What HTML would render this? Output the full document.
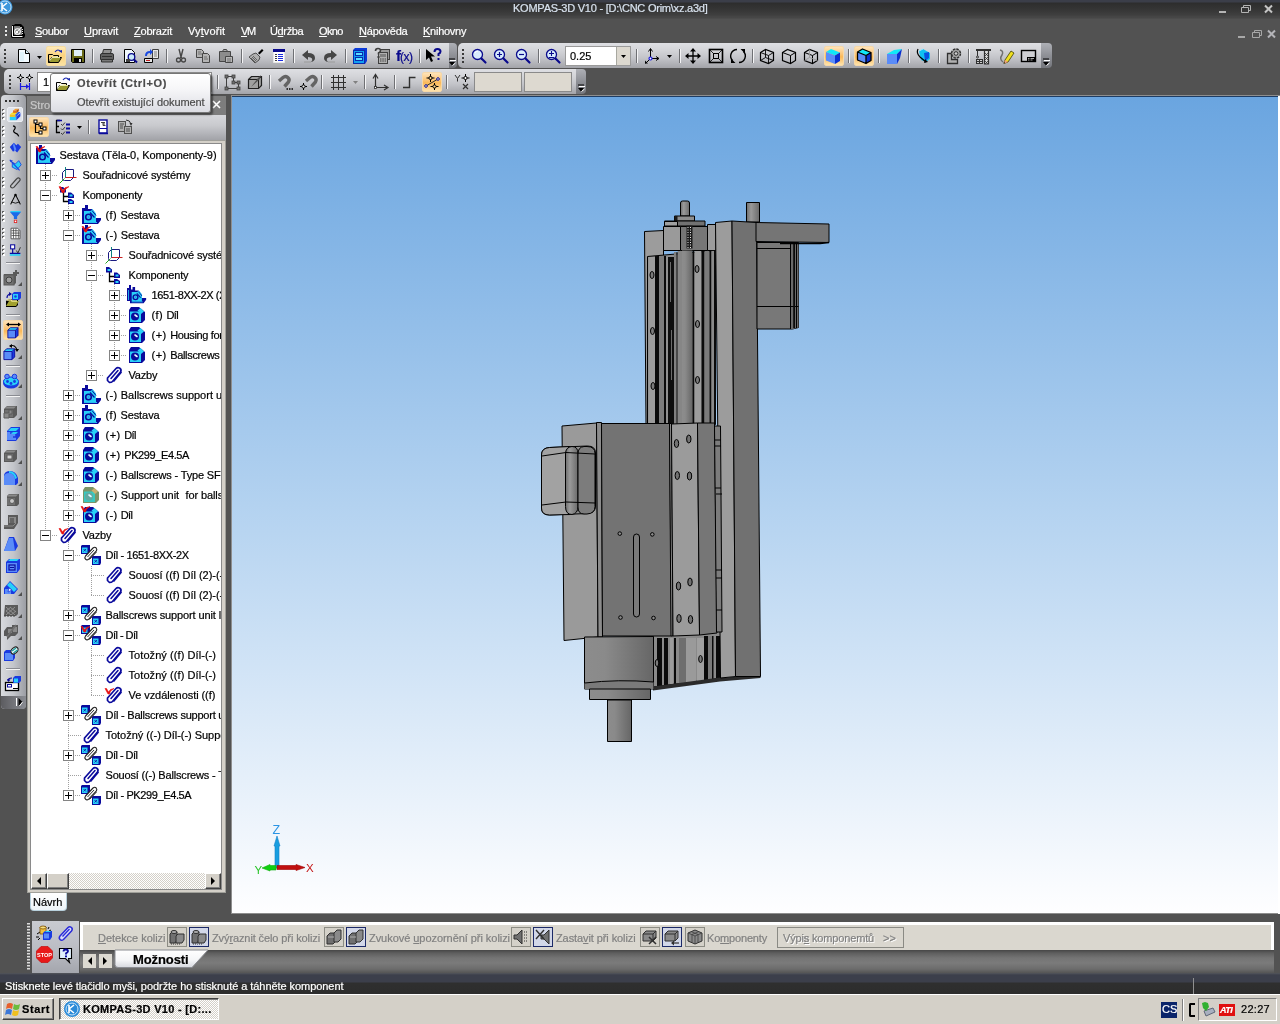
<!DOCTYPE html>
<html lang="cs">
<head>
<meta charset="utf-8">
<title>KOMPAS-3D V10 - [D:\CNC Orim\xz.a3d]</title>
<style>
*{box-sizing:border-box;margin:0;padding:0}
html,body{width:1280px;height:1024px;overflow:hidden;background:#525252}
body{font-family:"Liberation Sans",sans-serif;font-size:11px;line-height:13px;color:#000;position:relative}
.a{position:absolute}
.t{position:absolute;white-space:nowrap;-webkit-text-stroke:0.2px currentColor}
u{text-decoration:underline;text-underline-offset:1px}
#titlebar{left:0;top:0;width:1280px;height:19px;background:linear-gradient(#3b3e49 0,#3b3e49 2px,#2d2d2d 3px,#363636 10px,#3f3f3f 15px,#474747 17px,#464646 18px,#525252 19px)}
#title{left:513px;top:2px;color:#d8e2ee;font-size:11px}
#menubar{left:0;top:19px;width:1280px;height:24px;background:#525252}
.mi{top:25px;color:#fff}
.tb{border-radius:4px;background:linear-gradient(#dedfe3 0,#d3d4d8 30%,#c3c4c9 60%,#a3a4a9 100%)}
.tbend{background:linear-gradient(#aeb0b6,#8e9096 50%,#74767c);border-radius:0 4px 4px 0}
.sep{position:absolute;width:2px;height:14px;border-left:1px solid #6f7074;border-right:1px solid #f4f4f6}
.grip{position:absolute;width:2px;height:14px;background:repeating-linear-gradient(#3a3a3a 0,#3a3a3a 2px,transparent 2px,transparent 4px)}
.hot{position:absolute;border-radius:2px;background:linear-gradient(#fde9b8,#fbd27c 50%,#fbe2a2);border:1px solid #f5dca0}
.sel{position:absolute;border-radius:2px;background:linear-gradient(#fee3b8 0,#fcc880 35%,#fab858 55%,#fdd088 80%,#fee4ac 100%);border:1px solid #f6d8a8}
.inp{position:absolute;background:#fff;border:1px solid #8a8a8a}
.beige{position:absolute;background:#ddd9d0;border:1px solid #8a8a8a}
#viewport{left:231px;top:95px;width:1048px;height:818px;border:1px solid #8d8d8d;border-top-color:#8d8d8d;background:#fff}
#vp{left:232px;top:97px;width:1046px;height:815px;background:linear-gradient(#6aa5e0 0%,#b3d2f0 50%,#fefeff 100%)}
#lefttb{left:1px;top:95px;width:25px;height:614px;border-radius:4px 4px 4px 4px;background:linear-gradient(90deg,#d8dade 0,#c3c5ca 50%,#9c9ea4 100%)}
#tree{left:31px;top:144px;width:190px;height:729px;background:#fff;overflow:hidden}
.row{position:absolute;left:0;height:20px;white-space:nowrap}
.row .tx{position:absolute;top:4px;white-space:nowrap}
.ex{position:absolute;width:11px;height:11px;border:1px solid #848484;background:#fff}
.ex:before{content:"";position:absolute;left:1px;top:4px;width:7px;height:1px;background:#000}
.ex.p:after{content:"";position:absolute;left:4px;top:1px;width:1px;height:7px;background:#000}
.vd{position:absolute;width:1px;background:repeating-linear-gradient(#a0a0a0 0,#a0a0a0 1px,transparent 1px,transparent 2px)}
.hd{position:absolute;height:1px;background:repeating-linear-gradient(90deg,#a0a0a0 0,#a0a0a0 1px,transparent 1px,transparent 2px)}
svg{position:absolute;overflow:visible}
.dis{color:#808080}
.btn3{position:absolute;background:#d4d0c8;border:1px solid;border-color:#fff #404040 #404040 #fff;box-shadow:inset -1px -1px 0 #808080}
</style>
</head>
<body>
<div id="root" class="a" style="left:0;top:0;width:1280px;height:1024px;will-change:transform;background:#525252">
<!-- title bar -->
<div class="a" id="titlebar"></div>
<svg style="left:0;top:0" width="14" height="16" viewBox="0 0 14 16"><circle cx="5" cy="7" r="7.5" fill="#3d97dc"/><circle cx="5" cy="7" r="6" fill="none" stroke="#bfe0f8" stroke-width="1"/><path d="M2 3v8M2 7l5-4M2 7l5 4" stroke="#fff" stroke-width="1.6" fill="none"/></svg>
<div class="t" id="title" style="letter-spacing:-0.229px;">KOMPAS-3D V10 - [D:\CNC Orim\xz.a3d]</div>
<svg style="left:1210px;top:0" width="70" height="19" viewBox="0 0 70 19"><rect x="9" y="11" width="7" height="2" fill="#b4b4b4"/><path d="M31.500 7.500h7v5h-7zM33.500 7.500v-2h7v5h-2" fill="none" stroke="#b4b4b4"/><path d="M55 5.500l7 7M62 5.500l-7 7" stroke="#c4c4c4" stroke-width="2" fill="none"/></svg>
<!-- menubar -->
<div class="a" id="menubar"></div>
<div class="grip" style="left:5px;top:26px;height:11px;width:2px;background:repeating-linear-gradient(#e8e8e8 0,#e8e8e8 2px,transparent 2px,transparent 4px)"></div>
<svg style="left:11px;top:24px" width="14" height="14" viewBox="0 0 14 14"><path d="M1 1h2l1-1h6l3 3v6l1 1v2l-1 2h-12l-1-1z" fill="#000"/><path d="M1.500 2v10.500h10" fill="none" stroke="#fff" stroke-width="1"/><rect x="3" y="3" width="8" height="8" fill="#7a7a7a"/><path d="M3.500 2.500h5M11.500 5v6" stroke="#e8e8e8" stroke-width="1" stroke-dasharray="1 1"/><circle cx="6.500" cy="7.500" r="2.800" fill="none" stroke="#fff" stroke-width="1.100"/><path d="M5.500 8.500l5-5.500" stroke="#fff" stroke-width="1"/><circle cx="6" cy="8" r="1.200" fill="#fff"/></svg>
<div class="t mi" id="m0" style="letter-spacing:-0.364px;left:35px"><u>S</u>oubor</div>
<div class="t mi" id="m1" style="letter-spacing:-0.080px;left:84px"><u>U</u>pravit</div>
<div class="t mi" id="m2" style="letter-spacing:-0.196px;left:134px"><u>Z</u>obrazit</div>
<div class="t mi" id="m3" style="letter-spacing:0.115px;left:188px">Vy<u>t</u>vořit</div>
<div class="t mi" id="m4" style="letter-spacing:-1.358px;left:241px"><u>V</u>M</div>
<div class="t mi" id="m5" style="letter-spacing:-0.364px;left:270px">Ú<u>d</u>ržba</div>
<div class="t mi" id="m6" style="letter-spacing:-0.678px;left:319px"><u>O</u>kno</div>
<div class="t mi" id="m7" style="letter-spacing:-0.209px;left:359px"><u>N</u>ápověda</div>
<div class="t mi" id="m8" style="letter-spacing:-0.258px;left:423px"><u>K</u>nihovny</div>
<svg style="left:1238px;top:28px" width="40" height="12" viewBox="0 0 40 12"><rect x="0" y="8" width="7" height="2" fill="#a8a8a8"/><path d="M14.500 4.500h7v5h-7zM16.500 4.500v-2h7v5h-2" fill="none" stroke="#a8a8a8"/><path d="M30 2.500l7 7M37 2.500l-7 7" stroke="#b4b4b8" stroke-width="2" fill="none"/></svg>
<!-- toolbar row 1 -->
<div class="a tb" style="left:0px;top:43px;width:450px;height:25px;border-radius:5px 0 0 5px"></div>
<div class="a tbend" style="left:449px;top:43px;width:8px;height:25px"></div>
<div class="a tb" style="left:458px;top:43px;width:584px;height:25px;border-radius:5px 0 0 5px"></div>
<div class="a tbend" style="left:1041px;top:43px;width:11px;height:25px"></div>
<!-- toolbar row 2 -->
<div class="a tb" style="left:4px;top:69px;width:573px;height:25px;border-radius:5px 0 0 5px"></div>
<div class="a tbend" style="left:576px;top:69px;width:10px;height:25px"></div>
<div class="grip" style="left:4px;top:49px"></div>
<div class="hot" style="left:46px;top:46px;width:20px;height:20px"></div>
<svg style="left:16px;top:48px" width="16" height="16" viewBox="0 0 16 16"><path d="M2.500 1.500h7l4 4v9h-11z" fill="#f4fbff" stroke="#000"/><path d="M9.500 1.500v4h4" fill="#cfe8f4" stroke="#000"/><path d="M4 4h4v9h-4z" fill="#e0f2fa"/></svg>
<svg style="left:47px;top:48px" width="16" height="16" viewBox="0 0 16 16"><path d="M1.500 6.500h4l1 1h5v2" fill="#f0e8a0" stroke="#000"/><path d="M1.500 6.500v8h10l3-5h-10l-3 5" fill="#9a9a30" stroke="#000" stroke-linejoin="round"/><path d="M2.500 13l2.500-3.500h8" stroke="#e8e8b0" fill="none"/><path d="M8 4q3-4 6 0" fill="none" stroke="#1a2ab0" stroke-width="1.200"/><path d="M12 3l3 2l0-3z" fill="#1a2ab0"/></svg>
<svg style="left:70px;top:48px" width="16" height="16" viewBox="0 0 16 16"><path d="M1.500 1.500h13v13h-12l-1-1z" fill="#6a6a18" stroke="#000"/><rect x="4" y="2" width="8" height="6" fill="#e0f0f8"/><rect x="4" y="10" width="8" height="4" fill="#000"/><rect x="9" y="11" width="2" height="3" fill="#e0e0e0"/></svg>
<svg style="left:99px;top:48px" width="16" height="16" viewBox="0 0 16 16"><path d="M4.500 1.500h8l-1 4h-8z" fill="#909090" stroke="#303030"/><path d="M1.500 7q0-1.500 1.500-1.500h10q1.500 0 1.500 1.500v4.500h-13z" fill="#606060" stroke="#303030"/><path d="M2.500 11.500h11v2.500h-11z" fill="#787878" stroke="#303030"/><path d="M3 8.500h10" stroke="#303030"/></svg>
<svg style="left:122px;top:48px" width="16" height="16" viewBox="0 0 16 16"><path d="M2.500 1.500h7l3 3v10h-10z" fill="#f0f8fc" stroke="#000"/><circle cx="9.500" cy="9" r="3.300" fill="#c8e8f8" stroke="#0a0a8c" stroke-width="1.300"/><path d="M12 11.500l3 3" stroke="#0a0a8c" stroke-width="2"/><rect x="4" y="11" width="4" height="3" fill="#404040"/></svg>
<svg style="left:143px;top:48px" width="16" height="16" viewBox="0 0 16 16"><path d="M9.500 1.500h6v9h-6z" fill="#e8e8e8" stroke="#404040"/><path d="M11 4h3M11 6h3M11 8h3" stroke="#808080"/><path d="M1.500 10.500h8v4h-8z" fill="#e8e8e8" stroke="#000"/><rect x="3" y="12" width="4" height="1" fill="#c02020"/><path d="M2 8q0-5 5-5v-2l3 3l-3 3v-2q-3 0-3 3z" fill="#1a4ae0"/></svg>
<svg style="left:173px;top:48px" width="16" height="16" viewBox="0 0 16 16"><path d="M6 1l2 8l2-8" fill="none" stroke="#464646" stroke-width="1.400"/><circle cx="5.500" cy="12" r="2" fill="none" stroke="#464646" stroke-width="1.300"/><circle cx="10.500" cy="12" r="2" fill="none" stroke="#464646" stroke-width="1.300"/><path d="M8 9l-2 2M8 9l2 2" stroke="#464646"/></svg>
<svg style="left:195px;top:48px" width="16" height="16" viewBox="0 0 16 16"><path d="M1.500 1.500h5l2 2v6h-7z" fill="#b4b4b4" stroke="#464646"/><path d="M7.500 5.500h5l2 2v7h-7z" fill="#b4b4b4" stroke="#464646"/><path d="M3 4h3M3 6h4M9 9h3M9 11h4" stroke="#707070"/></svg>
<svg style="left:218px;top:48px" width="16" height="16" viewBox="0 0 16 16"><path d="M1.500 3.500h11v10h-11z" fill="#8c8c8c" stroke="#464646"/><path d="M4.500 3.500l1-2h3l1 2z" fill="#b0b0b0" stroke="#464646"/><path d="M7.500 8.500h7v6h-7z" fill="#b8b8b8" stroke="#464646"/><path d="M9 11h4M9 13h4" stroke="#707070"/></svg>
<svg style="left:248px;top:48px" width="16" height="16" viewBox="0 0 16 16"><path d="M10 5l4-4l1.500 1.500l-4 4z" fill="#000"/><path d="M5 6l3-1l4 4l-1 3l-4 3l-6-6z" fill="#b0b0b0" stroke="#505050"/><path d="M3 10l4 4M5 8l4 4M4 9l4 4" stroke="#505050" stroke-width="0.800"/></svg>
<svg style="left:271px;top:48px" width="16" height="16" viewBox="0 0 16 16"><path d="M2.500 1.500h11v13h-11z" fill="#fff" stroke="#e8e8e8"/><rect x="2" y="1" width="12" height="3" fill="#0a0a8c"/><g shape-rendering="crispEdges"><path d="M4 6.500h2M4 8.500h2M4 10.500h2M4 12.500h2" stroke="#404040"/><path d="M7 6.500h5M7 8.500h5M7 10.500h5M7 12.500h5" stroke="#1a2ae0"/></g></svg>
<svg style="left:301px;top:48px" width="16" height="16" viewBox="0 0 16 16"><path d="M1 7l6-5v3q7 0 7 5q0 3-4 4q2-2 1-3.500q-1-1.500-4-1.500v3z" fill="#464646"/><path d="M3 14h7" stroke="#9a9a9a"/></svg>
<svg style="left:322px;top:48px" width="16" height="16" viewBox="0 0 16 16"><path d="M15 7l-6-5v3q-7 0-7 5q0 3 4 4q-2-2-1-3.500q1-1.500 4-1.500v3z" fill="#464646"/><path d="M6 14h7" stroke="#9a9a9a"/></svg>
<svg style="left:352px;top:48px" width="16" height="16" viewBox="0 0 16 16"><path d="M1 2l2-2h12v13l-2 3h-12z" fill="#0a3ad8"/><rect x="1.500" y="2.500" width="11" height="13" fill="#10a0f0" stroke="#0a2ab0"/><rect x="3.500" y="4.500" width="7" height="3" fill="#60e0ff" stroke="#0a2ab0"/><rect x="3.500" y="9.500" width="7" height="3" fill="#60e0ff" stroke="#0a2ab0"/></svg>
<svg style="left:374px;top:48px" width="16" height="16" viewBox="0 0 16 16"><rect x="6.500" y="1.500" width="9" height="10" fill="#9a9a9a" stroke="#404040"/><rect x="4.500" y="4.500" width="9" height="11" fill="#b0b0b0" stroke="#404040"/><rect x="6" y="6" width="6" height="3" fill="#808080"/><path d="M6 11h6M6 13h6" stroke="#404040" stroke-dasharray="1.500 0.800"/><path d="M1.500 3q0-2.500 2.500-2.500q2.500 0 2.500 2q0 1.500-2 2.500v1.500" fill="none" stroke="#404040" stroke-width="1.600"/><rect x="3.500" y="8" width="2" height="2" fill="#404040"/></svg>
<svg style="left:425px;top:48px" width="16" height="16" viewBox="0 0 16 16"><path d="M1 1v11l3-2.500l2 4.500l2-1l-2-4.500h4z" fill="#000"/><path d="M9.500 4q0-3 3-3q3 0 3 2.500q0 1.500-2 2.500v2" fill="none" stroke="#0a0a8c" stroke-width="2"/><rect x="12.500" y="10" width="2" height="2" fill="#0a0a8c"/></svg>
<svg style="left:37px;top:56px" width="5" height="3" viewBox="0 0 5 3"><path d="M0 0h5l-2.500 3z" fill="#000"/></svg>
<div class="sep" style="left:92px;top:49px;height:14px"></div>
<div class="sep" style="left:166px;top:49px;height:14px"></div>
<div class="sep" style="left:241px;top:49px;height:14px"></div>
<div class="sep" style="left:293px;top:49px;height:14px"></div>
<div class="sep" style="left:345px;top:49px;height:14px"></div>
<div class="sep" style="left:419px;top:49px;height:14px"></div>
<div class="t" style="left:396px;top:48px;color:#0a0a8c;font-size:15px;line-height:16px;font-weight:bold;letter-spacing:-1px">f<span style="font-weight:normal;font-size:12px;letter-spacing:-0.500px">(x)</span></div>
<svg style="left:449px;top:59px" width="7" height="7" viewBox="0 0 7 7"><path d="M0 0h6" stroke="#000" stroke-width="1"/><path d="M1 1.500h6" stroke="#fff" stroke-width="1"/><path d="M0 3h6l-3 3.500z" fill="#000"/><path d="M3.500 6.500l3-2.500" stroke="#fff"/></svg>
<svg style="left:1043px;top:59px" width="7" height="7" viewBox="0 0 7 7"><path d="M0 0h6" stroke="#000" stroke-width="1"/><path d="M1 1.500h6" stroke="#fff" stroke-width="1"/><path d="M0 3h6l-3 3.500z" fill="#000"/><path d="M3.500 6.500l3-2.500" stroke="#fff"/></svg>
<svg style="left:578px;top:85px" width="7" height="7" viewBox="0 0 7 7"><path d="M0 0h6" stroke="#000" stroke-width="1"/><path d="M1 1.500h6" stroke="#fff" stroke-width="1"/><path d="M0 3h6l-3 3.500z" fill="#000"/><path d="M3.500 6.500l3-2.500" stroke="#fff"/></svg>
<div class="grip" style="left:462px;top:49px"></div>
<div class="sel" style="left:824px;top:46px;width:20px;height:20px"></div>
<div class="sel" style="left:854px;top:46px;width:20px;height:20px"></div>
<svg style="left:471px;top:48px" width="16" height="16" viewBox="0 0 16 16"><circle cx="6.500" cy="6.500" r="5" fill="#d8ecfc" stroke="#0a0a8c" stroke-width="1.300"/><path d="M10.500 10.500l4 4" stroke="#0a0a8c" stroke-width="2.200" stroke-linecap="round"/><path d="M4 5q1-2 3-2" stroke="#fff" fill="none"/></svg>
<svg style="left:493px;top:48px" width="16" height="16" viewBox="0 0 16 16"><circle cx="6.500" cy="6.500" r="5" fill="#d8ecfc" stroke="#0a0a8c" stroke-width="1.300"/><path d="M10.500 10.500l4 4" stroke="#0a0a8c" stroke-width="2.200" stroke-linecap="round"/><path d="M4 6.500h5M6.500 4v5" stroke="#0a0a8c" stroke-width="1.200"/></svg>
<svg style="left:515px;top:48px" width="16" height="16" viewBox="0 0 16 16"><circle cx="6.500" cy="6.500" r="5" fill="#d8ecfc" stroke="#0a0a8c" stroke-width="1.300"/><path d="M10.500 10.500l4 4" stroke="#0a0a8c" stroke-width="2.200" stroke-linecap="round"/><path d="M4 6.500h5" stroke="#0a0a8c" stroke-width="1.200"/></svg>
<svg style="left:545px;top:48px" width="16" height="16" viewBox="0 0 16 16"><circle cx="6.500" cy="6.500" r="5" fill="#d8ecfc" stroke="#0a0a8c" stroke-width="1.300"/><path d="M10.500 10.500l4 4" stroke="#0a0a8c" stroke-width="2.200" stroke-linecap="round"/><path d="M4 5.500h5M6.500 3v5M4 9.500h5" stroke="#0a0a8c" stroke-width="1.100"/></svg>
<svg style="left:644px;top:48px" width="16" height="16" viewBox="0 0 16 16"><path d="M6.500 1v9M6.500 10.500h8M6.500 10.500l-5 5" stroke="#000" fill="none"/><path d="M4.500 3.500l2-3l2 3M12 8.500l3 2l-3 2" fill="none" stroke="#000"/><path d="M1 12.500v3h3z" fill="#000"/><circle cx="6.500" cy="10.500" r="1.500" fill="#fff" stroke="#1a1ae0" stroke-width="1.200"/></svg>
<svg style="left:685px;top:48px" width="16" height="16" viewBox="0 0 16 16"><path d="M8 1v14M1 8h14" stroke="#000" stroke-width="1.300"/><path d="M8 0l3 3.500h-6zM8 16l3-3.500h-6zM0 8l3.500-3v6zM16 8l-3.500-3v6z" fill="#000"/></svg>
<svg style="left:708px;top:48px" width="16" height="16" viewBox="0 0 16 16"><rect x="1.500" y="1.500" width="13" height="13" fill="none" stroke="#000" stroke-width="1.600"/><rect x="5.500" y="5.500" width="5" height="5" fill="none" stroke="#000"/><path d="M2 2l3.500 3.500M14 2l-3.500 3.500M2 14l3.500-3.500M14 14l-3.500-3.500" stroke="#000" stroke-width="0.800"/></svg>
<svg style="left:730px;top:48px" width="16" height="16" viewBox="0 0 16 16"><path d="M7 1.500a6.500 6.500 0 0 0 -4.500 11" fill="none" stroke="#000" stroke-width="1.400"/><path d="M9 14.500a6.500 6.500 0 0 0 4.500 -11" fill="none" stroke="#000" stroke-width="1.400"/><path d="M1 10.500l4.500 4.500l-4.500 0z M15 5.500l-4.500-4.500l4.500 0z" fill="#000"/></svg>
<svg style="left:759px;top:48px" width="16" height="16" viewBox="0 0 16 16"><path d="M1.500 4.500l5-3l8 3v8l-5 3l-8-3z" fill="none" stroke="#000" stroke-width="1.200"/><path d="M1.500 4.500l8 3l5-3M9.500 7.500v8M6.500 1.500v8l-5 3M6.500 9.500l8 3" fill="none" stroke="#000" stroke-width="0.900"/></svg>
<svg style="left:781px;top:48px" width="16" height="16" viewBox="0 0 16 16"><path d="M1.500 4.500l5-3l8 3v8l-5 3l-8-3z" fill="none" stroke="#000" stroke-width="1.200"/><path d="M1.500 4.500l8 3l5-3M9.500 7.500v8" fill="none" stroke="#000" stroke-width="1"/></svg>
<svg style="left:803px;top:48px" width="16" height="16" viewBox="0 0 16 16"><path d="M1.500 4.500l5-3l8 3v8l-5 3l-8-3z" fill="none" stroke="#000" stroke-width="1.200"/><path d="M1.500 4.500l8 3l5-3M9.500 7.500v8" fill="none" stroke="#000" stroke-width="1"/><path d="M6.500 1.500v8l-5 3M6.500 9.500l8 3" fill="none" stroke="#9a9a9a" stroke-width="0.900"/></svg>
<svg style="left:825px;top:48px" width="16" height="16" viewBox="0 0 16 16"><path d="M1 4l5-3l9 3.500l-5 3z" fill="#10e8f8"/><path d="M1 4l9 3.500v8.500l-9-3.500z" fill="#5a8cf8"/><path d="M10 7.500l5-3v8.500l-5 3z" fill="#0a30d0"/></svg>
<svg style="left:856px;top:48px" width="16" height="16" viewBox="0 0 16 16"><path d="M1.500 4l5-3l8.500 3.500l-5 3z" fill="#10e8f8"/><path d="M1.500 4l8.500 3.500v8l-8.500-3.500z" fill="#5a8cf8"/><path d="M10 7.500l5-3v8l-5 3z" fill="#0a30d0"/><path d="M1.500 4l5-3l8.500 3.500v8l-5 3l-8.500-3.500zM1.500 4l8.500 3.500l5-3M10 7.500v8" fill="none" stroke="#000" stroke-width="1.300" stroke-linejoin="round"/></svg>
<svg style="left:886px;top:48px" width="16" height="16" viewBox="0 0 16 16"><path d="M1 6l7-4l8-1l-5 5z" fill="#10e8f8"/><path d="M1 6h10v10h-10z" fill="#5a8cf8"/><path d="M11 6l5-5l-2 9l-3 6z" fill="#0a30d0"/></svg>
<svg style="left:916px;top:48px" width="16" height="16" viewBox="0 0 16 16"><path d="M3 3l4-2l7 4v6l-4 3l-5-2z" fill="#10c0f0"/><path d="M8 5l5-1v6l-4 3z" fill="#0a50e0"/><path d="M2 1q-2 4 2 8l6 5" fill="none" stroke="#000" stroke-width="1.200"/><path d="M8 15l4-1l-3-3z" fill="#000"/><path d="M3 3l4-2" stroke="#a0e8ff"/></svg>
<svg style="left:946px;top:48px" width="16" height="16" viewBox="0 0 16 16"><path d="M1.500 5.500h4v6h6v4h-10z" fill="#b0b0b0" stroke="#303030" stroke-width="1.300"/><circle cx="10" cy="5.500" r="4.500" fill="#a0a0a0" stroke="#303030" stroke-width="1.400" stroke-dasharray="2.500 1"/><circle cx="10" cy="5.500" r="1.800" fill="#d0d0d0" stroke="#303030"/></svg>
<svg style="left:975px;top:48px" width="16" height="16" viewBox="0 0 16 16"><path d="M1 2h15" stroke="#303030" stroke-width="2"/><path d="M9.500 3v13h4v-13" fill="#d8d8d8" stroke="#303030" stroke-width="1.200"/><path d="M10 5l3 3M13 5l-3 3M10 9l3 3M13 9l-3 3M10 13l3 3M13 13l-3 3" stroke="#303030" stroke-width="0.800"/><path d="M2.500 3v5" stroke="#303030"/><circle cx="2.500" cy="9" r="1" fill="none" stroke="#303030"/><rect x="1.500" y="11.500" width="6" height="4" fill="#d0d0d0" stroke="#303030"/><path d="M4.500 11.500v4M1.500 13.500h6" stroke="#303030"/></svg>
<svg style="left:998px;top:48px" width="16" height="16" viewBox="0 0 16 16"><path d="M2 2q4 1 2 5q-3 4 1 7" fill="none" stroke="#707070" stroke-width="1.500"/><path d="M7 12l6-9l3 2l-6 9l-4 1.500z" fill="#f0e020" stroke="#404000" stroke-width="0.800"/><path d="M7 12l3 2l-4 1.500z" fill="#f0a080"/><path d="M5.500 15.500l1.500-0.500l-1-1z" fill="#000"/></svg>
<svg style="left:1020px;top:48px" width="16" height="16" viewBox="0 0 16 16"><rect x="1.500" y="2.500" width="14" height="11" fill="#cfd0d4" stroke="#000" stroke-width="1.400"/><rect x="7" y="9" width="8" height="4" fill="#000"/><path d="M8 10.500h1.500M10.500 10.500h3.500M8 12h1.500M10.500 12h2" stroke="#d0d0d0" stroke-width="0.800"/></svg>
<svg style="left:667px;top:55px" width="5" height="3" viewBox="0 0 5 3"><path d="M0 0h5l-2.500 3z" fill="#000"/></svg>
<div class="sep" style="left:538px;top:49px;height:14px"></div>
<div class="sep" style="left:636px;top:49px;height:14px"></div>
<div class="sep" style="left:679px;top:49px;height:14px"></div>
<div class="sep" style="left:752px;top:49px;height:14px"></div>
<div class="sep" style="left:848px;top:49px;height:14px"></div>
<div class="sep" style="left:878px;top:49px;height:14px"></div>
<div class="sep" style="left:908px;top:49px;height:14px"></div>
<div class="sep" style="left:938px;top:49px;height:14px"></div>
<div class="sep" style="left:968px;top:49px;height:14px"></div>
<div class="inp" style="left:565px;top:46px;width:66px;height:20px;border-color:#9a9a9a"></div>
<div class="a" style="left:616px;top:47px;width:14px;height:18px;background:#dcd8cf;border-left:1px solid #a8a8a0"></div>
<svg style="left:621px;top:55px" width="5" height="3" viewBox="0 0 5 3"><path d="M0 0h5l-2.500 3z" fill="#000"/></svg>
<div class="t" style="left:570px;top:50px">0.25</div>
<div class="grip" style="left:9px;top:75px"></div>
<div class="sel" style="left:422px;top:72px;width:20px;height:20px"></div>
<svg style="left:17px;top:74px" width="16" height="16" viewBox="0 0 16 16"><path d="M3.500 0v8M0 3.500h7M12.500 0v8M9 3.500h7" stroke="#000"/><circle cx="3.500" cy="3.500" r="1.600" fill="#fff" stroke="#000"/><circle cx="12.500" cy="3.500" r="1.600" fill="#fff" stroke="#000"/><path d="M3.500 9v7M12.500 9v7M4 12.500h8" stroke="#1a1ae0" stroke-width="1.200"/><path d="M12 12.500l-3-2.500v5z" fill="#1a1ae0"/></svg>
<svg style="left:224px;top:74px" width="16" height="16" viewBox="0 0 16 16"><path d="M2.500 2.500h7v6h5v6h-12z" fill="none" stroke="#404040"/><g fill="#707070" stroke="#404040" stroke-width="0.800"><rect x="1" y="1" width="3" height="3"/><rect x="8" y="1" width="3" height="3"/><rect x="8" y="7" width="3" height="3"/><rect x="13" y="7" width="3" height="3"/><rect x="13" y="13" width="3" height="3"/><rect x="1" y="13" width="3" height="3"/></g></svg>
<svg style="left:247px;top:74px" width="16" height="16" viewBox="0 0 16 16"><path d="M1.500 5.500l3-3h10v9l-3 3h-10z" fill="#a0a0a0" stroke="#202020" stroke-width="1.200"/><path d="M1.500 5.500h10v9M11.500 5.500l3-3" fill="none" stroke="#202020"/><path d="M4 13l7-9l3-3l-1 4z" fill="#505050"/></svg>
<svg style="left:277px;top:74px" width="16" height="16" viewBox="0 0 16 16"><path d="M2 7l4-3.500a3.600 3.600 0 0 1 5.500 4.500l-4 4.500" fill="none" stroke="#646464" stroke-width="3.400"/><path d="M9.500 15h1.500M12 15h1.500M14.500 15h1.500" stroke="#000" stroke-width="1.600"/></svg>
<svg style="left:300px;top:74px" width="16" height="16" viewBox="0 0 16 16"><path d="M6 7l4-3.500a3.600 3.600 0 0 1 5.500 4.500l-4 4.500" fill="none" stroke="#646464" stroke-width="3.400"/><path d="M3.500 9v7M0 12.500h7" stroke="#000"/><circle cx="3.500" cy="12.500" r="1.600" fill="#e8e8e8" stroke="#000"/></svg>
<svg style="left:330px;top:74px" width="16" height="16" viewBox="0 0 16 16"><path d="M1 3.500h15M1 8.500h15M1 13.500h15M3.500 1v15M8.500 1v15M13.500 1v15" stroke="#303030" stroke-width="1"/></svg>
<svg style="left:372px;top:74px" width="16" height="16" viewBox="0 0 16 16"><path d="M3.500 1v12.500h12" fill="none" stroke="#303030" stroke-width="1.200"/><path d="M1 4.500l2.500-4l2.500 4M12 11l4 2.500l-4 2.500" fill="none" stroke="#303030" stroke-width="1.200"/><rect x="2.500" y="12.500" width="2" height="2" fill="#fff" stroke="#303030" stroke-width="0.800"/></svg>
<svg style="left:401px;top:74px" width="16" height="16" viewBox="0 0 16 16"><path d="M2 13.500h6.500v-10h6" fill="none" stroke="#303030" stroke-width="1.400"/></svg>
<svg style="left:424px;top:74px" width="16" height="16" viewBox="0 0 16 16"><path d="M2 12l12-7" stroke="#303030"/><path d="M6.500 0v8M2.500 4h8M10.500 9v7M6.500 12.500h8" stroke="#000"/><circle cx="6.500" cy="4" r="1.600" fill="#fcd890" stroke="#000"/><circle cx="10.500" cy="12.500" r="1.600" fill="#fcd890" stroke="#000"/><circle cx="2" cy="12" r="1.300" fill="#fff" stroke="#0a0a8c"/><circle cx="14" cy="5" r="1.300" fill="#fff" stroke="#0a0a8c"/></svg>
<svg style="left:454px;top:74px" width="16" height="16" viewBox="0 0 16 16"><path d="M1 1l2.500 3.500v3M6 1l-2.500 3.500" fill="none" stroke="#303030"/><path d="M11.500 0v8M7.500 4h8" stroke="#000"/><circle cx="11.500" cy="4" r="1.600" fill="#fff" stroke="#000"/><path d="M9 10l5 5M14 10l-5 5" stroke="#303030" stroke-width="1.200"/></svg>
<svg style="left:353px;top:81px" width="5" height="3" viewBox="0 0 5 3"><path d="M0 0h5l-2.500 3z" fill="#808080"/></svg>
<div class="sep" style="left:217px;top:75px;height:14px"></div>
<div class="sep" style="left:269px;top:75px;height:14px"></div>
<div class="sep" style="left:321px;top:75px;height:14px"></div>
<div class="sep" style="left:364px;top:75px;height:14px"></div>
<div class="sep" style="left:394px;top:75px;height:14px"></div>
<div class="sep" style="left:446px;top:75px;height:14px"></div>
<div class="inp" style="left:37px;top:72px;width:175px;height:20px"></div>
<div class="t" style="left:43px;top:76px">1</div>
<div class="beige" style="left:474px;top:72px;width:48px;height:20px"></div>
<div class="beige" style="left:524px;top:72px;width:48px;height:20px"></div>
<!-- viewport -->
<div class="a" style="left:231px;top:95px;width:1049px;height:819px;background:#8e8e8e"></div>
<div class="a" style="left:232px;top:96px;width:1047px;height:817px;background:#1f3d63"></div>
<div class="a" style="left:1278px;top:96px;width:2px;height:818px;background:#fff"></div>
<div class="a" style="left:232px;top:912px;width:1047px;height:1px;background:#fff"></div>
<div class="a" id="vp"></div>
<!-- left vertical toolbar -->
<div class="a" id="lefttb"></div>
<!-- tree panel -->
<div class="a" style="left:27px;top:96px;width:199px;height:19px;background:#7d7d7d"></div>
<div class="t" style="left:30px;top:99px;color:#c8c8c8">Stro</div>
<svg style="left:212px;top:100px" width="9" height="9" viewBox="0 0 9 9"><path d="M1 1l7 7M8 1l-7 7" stroke="#fff" stroke-width="1.600"/></svg>
<div class="a" style="left:27px;top:115px;width:199px;height:26px;background:linear-gradient(#d6d7db 0,#c9cace 40%,#b4b5ba 70%,#9fa0a5 100%)"></div>
<div class="a" style="left:27px;top:140px;width:199px;height:753px;background:#d4d0c8;border:1px solid #a0a09a"></div>
<div class="a" style="left:30px;top:143px;width:192px;height:747px;background:#fff;border:1px solid #8a8a8a"></div>
<div class="a" id="tree">
<div class="vd" style="left:14px;top:20px;height:366px"></div>
<div class="vd" style="left:37px;top:60px;height:586px"></div>
<div class="vd" style="left:60px;top:100px;height:126px"></div>
<div class="vd" style="left:83px;top:140px;height:66px"></div>
<div class="vd" style="left:60px;top:422px;height:30px"></div>
<div class="vd" style="left:60px;top:502px;height:50px"></div>
<svg style="left:5px;top:1px" width="19" height="19" viewBox="0 0 19 19"><path d="M0 3h3v-3h3v4h4l4 5v4h5v2l-3 4h-16z" fill="#0a0a9c"/><path d="M2 6h6.500l2-2l3.500 4.500v8.500h-12z" fill="#28d0f8"/><path d="M8 7.500l4.500 5" stroke="#0a0a9c" stroke-width="1.200"/><path d="M10 5.500l4 5" stroke="#0a0a9c" stroke-width="1"/><circle cx="6.5" cy="12" r="2.800" fill="#28d0f8" stroke="#0a0a9c" stroke-width="1.600"/><circle cx="6.5" cy="12" r="1" fill="#3098e0"/><path d="M2 17.500h13" stroke="#28d0f8" stroke-width="0.900"/><path d="M0 1.500l3 5.500l1.500 0l1-3l3.500-2.500l-3.500 1l-2 2.500l-2-3.500z" fill="#e81010" stroke="#e81010" stroke-width="0.600"/></svg>
<div class="t" id="tr0" style="left:28.5px;top:5px"><span id="trr0" style="letter-spacing:-0.066px">Sestava (Těla-0, Komponenty-9)</span></div>
<div class="hd" style="left:21px;top:31px;width:6px"></div>
<div class="ex p" style="left:9px;top:26px"></div>
<svg style="left:28px;top:22px" width="18" height="18" viewBox="0 0 18 18"><path d="M6.500 3.500h8v8h-8z" fill="none" stroke="#1a1a80"/><path d="M6.500 3.500l-3 3v6q0 2 2 2h6l3-3" fill="none" stroke="#1a1a80"/><path d="M6.500 11.500h11" stroke="#c82020"/><path d="M6.500 1v10" stroke="#108080"/><path d="M5.500 12.500l-5 5" stroke="#20a020"/></svg>
<div class="t" id="tr1" style="left:51.5px;top:25px"><span id="trr1" style="letter-spacing:-0.144px">Souřadnicové systémy</span></div>
<div class="hd" style="left:21px;top:51px;width:6px"></div>
<div class="ex " style="left:9px;top:46px"></div>
<svg style="left:28px;top:42px" width="18" height="19" viewBox="0 0 18 19"><path d="M4.500 6v9.500h5M4.500 10.500h5" fill="none" stroke="#000" stroke-width="1.300"/><path d="M1 1h3l3 2.500v3h-6z" fill="#0a0a9c"/><rect x="2.500" y="3" width="3" height="2" fill="#28d0f8"/><path d="M9 6.500h3l3 2.500v3h-6z" fill="#0a0a9c"/><rect x="10.500" y="8.500" width="3" height="2" fill="#28d0f8"/><path d="M9 13h3l3 2v3h-6z" fill="#0a0a9c"/><rect x="10.500" y="15" width="3" height="2" fill="#28d0f8"/><g transform="translate(0,-1) scale(1.100)"><path d="M0 1.500l3 5.500l1.500 0l1-3l3.500-2.500l-3.500 1l-2 2.500l-2-3.500z" fill="#e81010" stroke="#e81010" stroke-width="0.600"/></g></svg>
<div class="t" id="tr2" style="left:51.5px;top:45px"><span id="trr2" style="letter-spacing:-0.197px">Komponenty</span></div>
<div class="hd" style="left:44px;top:71px;width:6px"></div>
<div class="ex p" style="left:32px;top:66px"></div>
<svg style="left:51px;top:61px" width="19" height="19" viewBox="0 0 19 19"><path d="M0 3h3v-3h3v4h4l4 5v4h5v2l-3 4h-16z" fill="#0a0a9c"/><path d="M2 6h6.500l2-2l3.500 4.500v8.500h-12z" fill="#28d0f8"/><path d="M8 7.500l4.500 5" stroke="#0a0a9c" stroke-width="1.200"/><path d="M10 5.500l4 5" stroke="#0a0a9c" stroke-width="1"/><circle cx="6.5" cy="12" r="2.800" fill="#28d0f8" stroke="#0a0a9c" stroke-width="1.600"/><circle cx="6.5" cy="12" r="1" fill="#3098e0"/><path d="M2 17.500h13" stroke="#28d0f8" stroke-width="0.900"/></svg>
<div class="t" id="tr3" style="left:74.5px;top:65px"><span style="letter-spacing:0.36px">(f) </span><span id="trr3" style="letter-spacing:-0.077px">Sestava</span></div>
<div class="hd" style="left:44px;top:91px;width:6px"></div>
<div class="ex " style="left:32px;top:86px"></div>
<svg style="left:51px;top:81px" width="19" height="19" viewBox="0 0 19 19"><path d="M0 3h3v-3h3v4h4l4 5v4h5v2l-3 4h-16z" fill="#0a0a9c"/><path d="M2 6h6.500l2-2l3.500 4.500v8.500h-12z" fill="#28d0f8"/><path d="M8 7.500l4.500 5" stroke="#0a0a9c" stroke-width="1.200"/><path d="M10 5.500l4 5" stroke="#0a0a9c" stroke-width="1"/><circle cx="6.5" cy="12" r="2.800" fill="#28d0f8" stroke="#0a0a9c" stroke-width="1.600"/><circle cx="6.5" cy="12" r="1" fill="#3098e0"/><path d="M2 17.500h13" stroke="#28d0f8" stroke-width="0.900"/><path d="M0 1.500l3 5.500l1.500 0l1-3l3.500-2.500l-3.500 1l-2 2.500l-2-3.500z" fill="#e81010" stroke="#e81010" stroke-width="0.600"/></svg>
<div class="t" id="tr4" style="left:74.5px;top:85px"><span style="letter-spacing:0.3px">(-) </span><span id="trr4" style="letter-spacing:-0.129px">Sestava</span></div>
<div class="hd" style="left:67px;top:111px;width:6px"></div>
<div class="ex p" style="left:55px;top:106px"></div>
<svg style="left:74px;top:102px" width="18" height="18" viewBox="0 0 18 18"><path d="M6.500 3.500h8v8h-8z" fill="none" stroke="#1a1a80"/><path d="M6.500 3.500l-3 3v6q0 2 2 2h6l3-3" fill="none" stroke="#1a1a80"/><path d="M6.500 11.500h11" stroke="#c82020"/><path d="M6.500 1v10" stroke="#108080"/><path d="M5.500 12.500l-5 5" stroke="#20a020"/></svg>
<div class="t" id="tr5" style="left:97.5px;top:105px"><span id="trr5" style="letter-spacing:-0.144px">Souřadnicové systémy</span></div>
<div class="hd" style="left:67px;top:131px;width:6px"></div>
<div class="ex " style="left:55px;top:126px"></div>
<svg style="left:74px;top:122px" width="18" height="19" viewBox="0 0 18 19"><path d="M4.500 6v9.500h5M4.500 10.500h5" fill="none" stroke="#000" stroke-width="1.300"/><path d="M1 1h3l3 2.500v3h-6z" fill="#0a0a9c"/><rect x="2.500" y="3" width="3" height="2" fill="#28d0f8"/><path d="M9 6.500h3l3 2.500v3h-6z" fill="#0a0a9c"/><rect x="10.500" y="8.500" width="3" height="2" fill="#28d0f8"/><path d="M9 13h3l3 2v3h-6z" fill="#0a0a9c"/><rect x="10.500" y="15" width="3" height="2" fill="#28d0f8"/></svg>
<div class="t" id="tr6" style="left:97.5px;top:125px"><span id="trr6" style="letter-spacing:-0.197px">Komponenty</span></div>
<div class="hd" style="left:90px;top:151px;width:6px"></div>
<div class="ex p" style="left:78px;top:146px"></div>
<svg style="left:96px;top:141px" width="19" height="19" viewBox="0 0 19 19"><path d="M0 3h2v-3h2v16h-4z" fill="#0a0a9c"/><path d="M1.500 5v10" stroke="#28d0f8" stroke-width="0.800"/><g transform="translate(3,2) scale(0.850)"><path d="M0 3h3v-3h3v4h4l4 5v4h5v2l-3 4h-16z" fill="#0a0a9c"/><path d="M2 6h6.500l2-2l3.500 4.500v8.500h-12z" fill="#28d0f8"/><path d="M8 7.500l4.500 5" stroke="#0a0a9c" stroke-width="1.200"/><path d="M10 5.500l4 5" stroke="#0a0a9c" stroke-width="1"/><circle cx="6.5" cy="12" r="2.800" fill="#28d0f8" stroke="#0a0a9c" stroke-width="1.600"/><circle cx="6.5" cy="12" r="1" fill="#3098e0"/><path d="M2 17.500h13" stroke="#28d0f8" stroke-width="0.900"/></g></svg>
<div class="t" id="tr7" style="left:120.5px;top:145px"><span id="trr7" style="letter-spacing:-0.395px">1651-8XX-2X (2)</span></div>
<div class="hd" style="left:90px;top:171px;width:6px"></div>
<div class="ex p" style="left:78px;top:166px"></div>
<svg style="left:98px;top:163px" width="16" height="16" viewBox="0 0 16 16"><path d="M2 0h8l6 5v8l-3 3h-13v-13z" fill="#0a0a9c"/><path d="M1 4.500h11v10.500h-11z" fill="#28d0f8"/><path d="M8.500 3.500l3-2.500l3.500 3.500l-3 2.500z" fill="#28d0f8"/><circle cx="6" cy="9.500" r="4" fill="#0a0a9c"/><path d="M6 8l2 1.500" stroke="#e8f8ff" stroke-width="1.600" stroke-linecap="round"/></svg>
<div class="t" id="tr8" style="left:120.5px;top:165px"><span style="letter-spacing:0.36px">(f) </span><span id="trr8" style="letter-spacing:-0.600px">Díl</span></div>
<div class="hd" style="left:90px;top:191px;width:6px"></div>
<div class="ex p" style="left:78px;top:186px"></div>
<svg style="left:98px;top:183px" width="16" height="16" viewBox="0 0 16 16"><path d="M2 0h8l6 5v8l-3 3h-13v-13z" fill="#0a0a9c"/><path d="M1 4.500h11v10.500h-11z" fill="#28d0f8"/><path d="M8.500 3.500l3-2.500l3.500 3.500l-3 2.500z" fill="#28d0f8"/><circle cx="6" cy="9.500" r="4" fill="#0a0a9c"/><path d="M6 8l2 1.500" stroke="#e8f8ff" stroke-width="1.600" stroke-linecap="round"/></svg>
<div class="t" id="tr9" style="left:120.5px;top:185px"><span style="letter-spacing:0.48px">(+) </span><span id="trr9" style="letter-spacing:-0.366px">Housing for</span></div>
<div class="hd" style="left:90px;top:211px;width:6px"></div>
<div class="ex p" style="left:78px;top:206px"></div>
<svg style="left:98px;top:203px" width="16" height="16" viewBox="0 0 16 16"><path d="M2 0h8l6 5v8l-3 3h-13v-13z" fill="#0a0a9c"/><path d="M1 4.500h11v10.500h-11z" fill="#28d0f8"/><path d="M8.500 3.500l3-2.500l3.500 3.500l-3 2.500z" fill="#28d0f8"/><circle cx="6" cy="9.500" r="4" fill="#0a0a9c"/><path d="M6 8l2 1.500" stroke="#e8f8ff" stroke-width="1.600" stroke-linecap="round"/></svg>
<div class="t" id="tr10" style="left:120.5px;top:205px"><span style="letter-spacing:0.48px">(+) </span><span id="trr10" style="letter-spacing:-0.338px">Ballscrews</span></div>
<div class="hd" style="left:67px;top:231px;width:6px"></div>
<div class="ex p" style="left:55px;top:226px"></div>
<svg style="left:75px;top:222px" width="16" height="18" viewBox="0 0 16 18"><path d="M1.500 12l8.500-9.500q1.500-1.500 3.500-0.500q2.500 1.500 1 4l-8 9.500q-1 1-3 1l-2-2z" fill="#fff" stroke="#0a0a9c" stroke-width="1.700" stroke-linejoin="round"/><path d="M5 12.500l7-8" stroke="#0a0a9c" stroke-width="1.500" stroke-linecap="round"/><path d="M7.500 15.500l8-9.500" stroke="#0a0a9c" stroke-width="1.500"/></svg>
<div class="t" id="tr11" style="left:97.5px;top:225px"><span id="trr11" style="letter-spacing:-0.193px">Vazby</span></div>
<div class="hd" style="left:44px;top:251px;width:6px"></div>
<div class="ex p" style="left:32px;top:246px"></div>
<svg style="left:51px;top:241px" width="19" height="19" viewBox="0 0 19 19"><path d="M0 3h3v-3h3v4h4l4 5v4h5v2l-3 4h-16z" fill="#0a0a9c"/><path d="M2 6h6.500l2-2l3.500 4.500v8.500h-12z" fill="#28d0f8"/><path d="M8 7.500l4.500 5" stroke="#0a0a9c" stroke-width="1.200"/><path d="M10 5.500l4 5" stroke="#0a0a9c" stroke-width="1"/><circle cx="6.5" cy="12" r="2.800" fill="#28d0f8" stroke="#0a0a9c" stroke-width="1.600"/><circle cx="6.5" cy="12" r="1" fill="#3098e0"/><path d="M2 17.500h13" stroke="#28d0f8" stroke-width="0.900"/></svg>
<div class="t" id="tr12" style="left:74.5px;top:245px"><span style="letter-spacing:0.3px">(-) </span><span id="trr12" style="letter-spacing:-0.007px">Ballscrews support unit</span></div>
<div class="hd" style="left:44px;top:271px;width:6px"></div>
<div class="ex p" style="left:32px;top:266px"></div>
<svg style="left:51px;top:261px" width="19" height="19" viewBox="0 0 19 19"><path d="M0 3h3v-3h3v4h4l4 5v4h5v2l-3 4h-16z" fill="#0a0a9c"/><path d="M2 6h6.500l2-2l3.500 4.500v8.500h-12z" fill="#28d0f8"/><path d="M8 7.500l4.500 5" stroke="#0a0a9c" stroke-width="1.200"/><path d="M10 5.500l4 5" stroke="#0a0a9c" stroke-width="1"/><circle cx="6.5" cy="12" r="2.800" fill="#28d0f8" stroke="#0a0a9c" stroke-width="1.600"/><circle cx="6.5" cy="12" r="1" fill="#3098e0"/><path d="M2 17.500h13" stroke="#28d0f8" stroke-width="0.900"/></svg>
<div class="t" id="tr13" style="left:74.5px;top:265px"><span style="letter-spacing:0.36px">(f) </span><span id="trr13" style="letter-spacing:-0.077px">Sestava</span></div>
<div class="hd" style="left:44px;top:291px;width:6px"></div>
<div class="ex p" style="left:32px;top:286px"></div>
<svg style="left:52px;top:283px" width="16" height="16" viewBox="0 0 16 16"><path d="M2 0h8l6 5v8l-3 3h-13v-13z" fill="#0a0a9c"/><path d="M1 4.500h11v10.500h-11z" fill="#28d0f8"/><path d="M8.500 3.500l3-2.500l3.500 3.500l-3 2.500z" fill="#28d0f8"/><circle cx="6" cy="9.500" r="4" fill="#0a0a9c"/><path d="M6 8l2 1.500" stroke="#e8f8ff" stroke-width="1.600" stroke-linecap="round"/></svg>
<div class="t" id="tr14" style="left:74.5px;top:285px"><span style="letter-spacing:0.48px">(+) </span><span id="trr14" style="letter-spacing:-0.596px">Díl</span></div>
<div class="hd" style="left:44px;top:311px;width:6px"></div>
<div class="ex p" style="left:32px;top:306px"></div>
<svg style="left:52px;top:303px" width="16" height="16" viewBox="0 0 16 16"><path d="M2 0h8l6 5v8l-3 3h-13v-13z" fill="#0a0a9c"/><path d="M1 4.500h11v10.500h-11z" fill="#28d0f8"/><path d="M8.500 3.500l3-2.500l3.500 3.500l-3 2.500z" fill="#28d0f8"/><circle cx="6" cy="9.500" r="4" fill="#0a0a9c"/><path d="M6 8l2 1.500" stroke="#e8f8ff" stroke-width="1.600" stroke-linecap="round"/></svg>
<div class="t" id="tr15" style="left:74.5px;top:305px"><span style="letter-spacing:0.48px">(+) </span><span id="trr15" style="letter-spacing:-0.396px">PK299_E4.5A</span></div>
<div class="hd" style="left:44px;top:331px;width:6px"></div>
<div class="ex p" style="left:32px;top:326px"></div>
<svg style="left:52px;top:323px" width="16" height="16" viewBox="0 0 16 16"><path d="M2 0h8l6 5v8l-3 3h-13v-13z" fill="#0a0a9c"/><path d="M1 4.500h11v10.500h-11z" fill="#28d0f8"/><path d="M8.500 3.500l3-2.500l3.500 3.500l-3 2.500z" fill="#28d0f8"/><circle cx="6" cy="9.500" r="4" fill="#0a0a9c"/><path d="M6 8l2 1.500" stroke="#e8f8ff" stroke-width="1.600" stroke-linecap="round"/></svg>
<div class="t" id="tr16" style="left:74.5px;top:325px"><span style="letter-spacing:0.3px">(-) </span><span id="trr16" style="letter-spacing:-0.165px">Ballscrews - Type SFS</span></div>
<div class="hd" style="left:44px;top:351px;width:6px"></div>
<div class="ex p" style="left:32px;top:346px"></div>
<svg style="left:52px;top:343px" width="16" height="16" viewBox="0 0 16 16"><path d="M2 0h8l6 5v8l-3 3h-13v-13z" fill="#7c9468"/><path d="M1 4.500h11v10.500h-11z" fill="#38c8c0"/><path d="M8.500 3.500l3-2.500l3.500 3.500l-3 2.500z" fill="#c8b070"/><circle cx="6" cy="9.500" r="4" fill="#60a8a0"/><path d="M6 8l2 1.500" stroke="#e8f8ff" stroke-width="1.600" stroke-linecap="round"/></svg>
<div class="t" id="tr17" style="left:74.5px;top:345px"><span style="letter-spacing:0.3px">(-) </span><span id="trr17" style="letter-spacing:-0.094px">Support unit<i style="display:inline-block;width:6.5px"></i>for ballscrews</span></div>
<div class="hd" style="left:44px;top:371px;width:6px"></div>
<div class="ex p" style="left:32px;top:366px"></div>
<svg style="left:52px;top:363px" width="16" height="16" viewBox="0 0 16 16"><path d="M2 0h8l6 5v8l-3 3h-13v-13z" fill="#0a0a9c"/><path d="M1 4.500h11v10.500h-11z" fill="#28d0f8"/><path d="M8.500 3.500l3-2.500l3.500 3.500l-3 2.500z" fill="#28d0f8"/><circle cx="6" cy="9.500" r="4" fill="#0a0a9c"/><path d="M6 8l2 1.500" stroke="#e8f8ff" stroke-width="1.600" stroke-linecap="round"/><g transform="translate(-2,-2)"><path d="M0 1.500l3 5.500l1.500 0l1-3l3.500-2.500l-3.500 1l-2 2.500l-2-3.500z" fill="#e81010" stroke="#e81010" stroke-width="0.600"/></g></svg>
<div class="t" id="tr18" style="left:74.5px;top:365px"><span style="letter-spacing:0.3px">(-) </span><span id="trr18" style="letter-spacing:-0.600px">Díl</span></div>
<div class="hd" style="left:21px;top:391px;width:6px"></div>
<div class="ex " style="left:9px;top:386px"></div>
<svg style="left:29px;top:382px" width="16" height="18" viewBox="0 0 16 18"><path d="M1.500 12l8.500-9.500q1.500-1.500 3.500-0.500q2.500 1.500 1 4l-8 9.500q-1 1-3 1l-2-2z" fill="#fff" stroke="#0a0a9c" stroke-width="1.700" stroke-linejoin="round"/><path d="M5 12.500l7-8" stroke="#0a0a9c" stroke-width="1.500" stroke-linecap="round"/><path d="M7.500 15.500l8-9.500" stroke="#0a0a9c" stroke-width="1.500"/><g transform="translate(-1,1)"><path d="M0 1.500l3 5.500l1.500 0l1-3l3.500-2.500l-3.500 1l-2 2.500l-2-3.500z" fill="#e81010" stroke="#e81010" stroke-width="0.600"/></g></svg>
<div class="t" id="tr19" style="left:51.5px;top:385px"><span id="trr19" style="letter-spacing:-0.193px">Vazby</span></div>
<div class="hd" style="left:44px;top:411px;width:6px"></div>
<div class="ex " style="left:32px;top:406px"></div>
<svg style="left:50px;top:401px" width="20" height="20" viewBox="0 0 20 20"><path d="M0 1l1-1h8v7l-1 2h-8z" fill="#0a0a9c"/><rect x="1" y="2.5" width="5.500" height="5.500" fill="#28d0f8"/><path d="M2.5 4l2.500 2.500M5 4l-2.500 2.500" stroke="#0a0a9c" stroke-width="0.800"/><path d="M11 12l1-1h8v7l-1 2h-8z" fill="#0a0a9c"/><rect x="12" y="13.5" width="5.500" height="5.500" fill="#28d0f8"/><path d="M13.5 15l2.500 2.500M16 15l-2.500 2.500" stroke="#0a0a9c" stroke-width="0.800"/><path d="M4.500 11l7.500-8q1.800-1.500 3.200 0q1.300 1.500 0 3.200l-7.500 8q-1.800 1.500-3.200 0q-1.300-1.500 0-3.200z" fill="#fafafa" stroke="#202020" stroke-width="1.100"/><path d="M6.500 12l6.500-7" stroke="#202020" stroke-width="0.900"/><path d="M8.500 14.500l7-7.500" stroke="#202020" stroke-width="0.900"/></svg>
<div class="t" id="tr20" style="left:74.5px;top:405px"><span id="trr20" style="letter-spacing:-0.357px">Díl - 1651-8XX-2X</span></div>
<div class="hd" style="left:60px;top:431px;width:14px"></div>
<svg style="left:75px;top:422px" width="16" height="18" viewBox="0 0 16 18"><path d="M1.500 12l8.500-9.500q1.500-1.500 3.500-0.500q2.500 1.500 1 4l-8 9.500q-1 1-3 1l-2-2z" fill="#fff" stroke="#0a0a9c" stroke-width="1.700" stroke-linejoin="round"/><path d="M5 12.500l7-8" stroke="#0a0a9c" stroke-width="1.500" stroke-linecap="round"/><path d="M7.500 15.500l8-9.500" stroke="#0a0a9c" stroke-width="1.500"/></svg>
<div class="t" id="tr21" style="left:97.5px;top:425px"><span id="trr21" style="letter-spacing:-0.029px">Souosí ((f) Díl (2)-(-) Díl)</span></div>
<div class="hd" style="left:60px;top:451px;width:14px"></div>
<svg style="left:75px;top:442px" width="16" height="18" viewBox="0 0 16 18"><path d="M1.500 12l8.500-9.500q1.500-1.500 3.500-0.500q2.500 1.500 1 4l-8 9.500q-1 1-3 1l-2-2z" fill="#fff" stroke="#0a0a9c" stroke-width="1.700" stroke-linejoin="round"/><path d="M5 12.500l7-8" stroke="#0a0a9c" stroke-width="1.500" stroke-linecap="round"/><path d="M7.500 15.500l8-9.500" stroke="#0a0a9c" stroke-width="1.500"/></svg>
<div class="t" id="tr22" style="left:97.5px;top:445px"><span id="trr22" style="letter-spacing:-0.029px">Souosí ((f) Díl (2)-(-) Díl)</span></div>
<div class="hd" style="left:44px;top:471px;width:6px"></div>
<div class="ex p" style="left:32px;top:466px"></div>
<svg style="left:50px;top:461px" width="20" height="20" viewBox="0 0 20 20"><path d="M0 1l1-1h8v7l-1 2h-8z" fill="#0a0a9c"/><rect x="1" y="2.5" width="5.500" height="5.500" fill="#28d0f8"/><path d="M2.5 4l2.500 2.500M5 4l-2.500 2.500" stroke="#0a0a9c" stroke-width="0.800"/><path d="M11 12l1-1h8v7l-1 2h-8z" fill="#0a0a9c"/><rect x="12" y="13.5" width="5.500" height="5.500" fill="#28d0f8"/><path d="M13.5 15l2.500 2.500M16 15l-2.500 2.500" stroke="#0a0a9c" stroke-width="0.800"/><path d="M4.500 11l7.500-8q1.800-1.500 3.200 0q1.300 1.500 0 3.200l-7.500 8q-1.800 1.500-3.200 0q-1.300-1.500 0-3.200z" fill="#fafafa" stroke="#202020" stroke-width="1.100"/><path d="M6.500 12l6.500-7" stroke="#202020" stroke-width="0.900"/><path d="M8.500 14.500l7-7.500" stroke="#202020" stroke-width="0.900"/></svg>
<div class="t" id="tr23" style="left:74.5px;top:465px"><span id="trr23" style="letter-spacing:-0.126px">Ballscrews support unit locating</span></div>
<div class="hd" style="left:44px;top:491px;width:6px"></div>
<div class="ex " style="left:32px;top:486px"></div>
<svg style="left:50px;top:481px" width="20" height="20" viewBox="0 0 20 20"><path d="M0 1l1-1h8v7l-1 2h-8z" fill="#0a0a9c"/><rect x="1" y="2.5" width="5.500" height="5.500" fill="#28d0f8"/><path d="M2.5 4l2.500 2.500M5 4l-2.500 2.500" stroke="#0a0a9c" stroke-width="0.800"/><path d="M11 12l1-1h8v7l-1 2h-8z" fill="#0a0a9c"/><rect x="12" y="13.5" width="5.500" height="5.500" fill="#28d0f8"/><path d="M13.5 15l2.500 2.500M16 15l-2.500 2.500" stroke="#0a0a9c" stroke-width="0.800"/><path d="M4.500 11l7.500-8q1.800-1.500 3.200 0q1.300 1.500 0 3.200l-7.500 8q-1.800 1.500-3.200 0q-1.300-1.500 0-3.200z" fill="#fafafa" stroke="#202020" stroke-width="1.100"/><path d="M6.500 12l6.500-7" stroke="#202020" stroke-width="0.900"/><path d="M8.500 14.500l7-7.500" stroke="#202020" stroke-width="0.900"/><g transform="translate(0,0)"><path d="M0 1.500l3 5.500l1.500 0l1-3l3.500-2.500l-3.500 1l-2 2.500l-2-3.500z" fill="#e81010" stroke="#e81010" stroke-width="0.600"/></g></svg>
<div class="t" id="tr24" style="left:74.5px;top:485px"><span id="trr24" style="letter-spacing:-0.519px">Díl - Díl</span></div>
<div class="hd" style="left:60px;top:511px;width:14px"></div>
<svg style="left:75px;top:502px" width="16" height="18" viewBox="0 0 16 18"><path d="M1.500 12l8.500-9.500q1.500-1.500 3.500-0.500q2.500 1.500 1 4l-8 9.500q-1 1-3 1l-2-2z" fill="#fff" stroke="#0a0a9c" stroke-width="1.700" stroke-linejoin="round"/><path d="M5 12.500l7-8" stroke="#0a0a9c" stroke-width="1.500" stroke-linecap="round"/><path d="M7.500 15.500l8-9.500" stroke="#0a0a9c" stroke-width="1.500"/></svg>
<div class="t" id="tr25" style="left:97.5px;top:505px"><span id="trr25" style="letter-spacing:0.071px">Totožný ((f) Díl-(-)&nbsp; Díl)</span></div>
<div class="hd" style="left:60px;top:531px;width:14px"></div>
<svg style="left:75px;top:522px" width="16" height="18" viewBox="0 0 16 18"><path d="M1.500 12l8.500-9.500q1.500-1.500 3.500-0.500q2.500 1.500 1 4l-8 9.500q-1 1-3 1l-2-2z" fill="#fff" stroke="#0a0a9c" stroke-width="1.700" stroke-linejoin="round"/><path d="M5 12.500l7-8" stroke="#0a0a9c" stroke-width="1.500" stroke-linecap="round"/><path d="M7.500 15.500l8-9.500" stroke="#0a0a9c" stroke-width="1.500"/></svg>
<div class="t" id="tr26" style="left:97.5px;top:525px"><span id="trr26" style="letter-spacing:0.071px">Totožný ((f) Díl-(-)&nbsp; Díl)</span></div>
<div class="hd" style="left:60px;top:551px;width:14px"></div>
<svg style="left:75px;top:542px" width="16" height="18" viewBox="0 0 16 18"><path d="M1.500 12l8.500-9.500q1.500-1.500 3.500-0.500q2.500 1.500 1 4l-8 9.500q-1 1-3 1l-2-2z" fill="#fff" stroke="#0a0a9c" stroke-width="1.700" stroke-linejoin="round"/><path d="M5 12.500l7-8" stroke="#0a0a9c" stroke-width="1.500" stroke-linecap="round"/><path d="M7.500 15.500l8-9.500" stroke="#0a0a9c" stroke-width="1.500"/><g transform="translate(-1,1)"><path d="M0 1.500l3 5.500l1.500 0l1-3l3.500-2.500l-3.500 1l-2 2.500l-2-3.500z" fill="#e81010" stroke="#e81010" stroke-width="0.600"/></g></svg>
<div class="t" id="tr27" style="left:97.5px;top:545px"><span id="trr27" style="letter-spacing:-0.066px">Ve vzdálenosti ((f)&nbsp; Díl)</span></div>
<div class="hd" style="left:44px;top:571px;width:6px"></div>
<div class="ex p" style="left:32px;top:566px"></div>
<svg style="left:50px;top:561px" width="20" height="20" viewBox="0 0 20 20"><path d="M0 1l1-1h8v7l-1 2h-8z" fill="#0a0a9c"/><rect x="1" y="2.5" width="5.500" height="5.500" fill="#28d0f8"/><path d="M2.5 4l2.500 2.500M5 4l-2.500 2.500" stroke="#0a0a9c" stroke-width="0.800"/><path d="M11 12l1-1h8v7l-1 2h-8z" fill="#0a0a9c"/><rect x="12" y="13.5" width="5.500" height="5.500" fill="#28d0f8"/><path d="M13.5 15l2.500 2.500M16 15l-2.500 2.500" stroke="#0a0a9c" stroke-width="0.800"/><path d="M4.500 11l7.500-8q1.800-1.500 3.200 0q1.300 1.500 0 3.200l-7.500 8q-1.800 1.500-3.200 0q-1.300-1.500 0-3.200z" fill="#fafafa" stroke="#202020" stroke-width="1.100"/><path d="M6.500 12l6.500-7" stroke="#202020" stroke-width="0.900"/><path d="M8.500 14.500l7-7.500" stroke="#202020" stroke-width="0.900"/></svg>
<div class="t" id="tr28" style="left:74.5px;top:565px"><span id="trr28" style="letter-spacing:-0.231px">Díl - Ballscrews support unit</span></div>
<div class="hd" style="left:37px;top:591px;width:14px"></div>
<svg style="left:52px;top:582px" width="16" height="18" viewBox="0 0 16 18"><path d="M1.500 12l8.500-9.500q1.500-1.500 3.500-0.500q2.500 1.500 1 4l-8 9.500q-1 1-3 1l-2-2z" fill="#fff" stroke="#0a0a9c" stroke-width="1.700" stroke-linejoin="round"/><path d="M5 12.500l7-8" stroke="#0a0a9c" stroke-width="1.500" stroke-linecap="round"/><path d="M7.500 15.500l8-9.500" stroke="#0a0a9c" stroke-width="1.500"/></svg>
<div class="t" id="tr29" style="left:74.5px;top:585px"><span id="trr29" style="letter-spacing:-0.029px">Totožný ((-) Díl-(-) Support unit</span></div>
<div class="hd" style="left:44px;top:611px;width:6px"></div>
<div class="ex p" style="left:32px;top:606px"></div>
<svg style="left:50px;top:601px" width="20" height="20" viewBox="0 0 20 20"><path d="M0 1l1-1h8v7l-1 2h-8z" fill="#0a0a9c"/><rect x="1" y="2.5" width="5.500" height="5.500" fill="#28d0f8"/><path d="M2.5 4l2.500 2.500M5 4l-2.500 2.500" stroke="#0a0a9c" stroke-width="0.800"/><path d="M11 12l1-1h8v7l-1 2h-8z" fill="#0a0a9c"/><rect x="12" y="13.5" width="5.500" height="5.500" fill="#28d0f8"/><path d="M13.5 15l2.500 2.500M16 15l-2.500 2.500" stroke="#0a0a9c" stroke-width="0.800"/><path d="M4.500 11l7.500-8q1.800-1.500 3.200 0q1.300 1.500 0 3.200l-7.500 8q-1.800 1.500-3.200 0q-1.300-1.500 0-3.200z" fill="#fafafa" stroke="#202020" stroke-width="1.100"/><path d="M6.500 12l6.500-7" stroke="#202020" stroke-width="0.900"/><path d="M8.500 14.500l7-7.500" stroke="#202020" stroke-width="0.900"/></svg>
<div class="t" id="tr30" style="left:74.5px;top:605px"><span id="trr30" style="letter-spacing:-0.519px">Díl - Díl</span></div>
<div class="hd" style="left:37px;top:631px;width:14px"></div>
<svg style="left:52px;top:622px" width="16" height="18" viewBox="0 0 16 18"><path d="M1.500 12l8.500-9.500q1.500-1.500 3.500-0.500q2.500 1.500 1 4l-8 9.500q-1 1-3 1l-2-2z" fill="#fff" stroke="#0a0a9c" stroke-width="1.700" stroke-linejoin="round"/><path d="M5 12.500l7-8" stroke="#0a0a9c" stroke-width="1.500" stroke-linecap="round"/><path d="M7.500 15.500l8-9.500" stroke="#0a0a9c" stroke-width="1.500"/></svg>
<div class="t" id="tr31" style="left:74.5px;top:625px"><span id="trr31" style="letter-spacing:-0.179px">Souosí ((-) Ballscrews - Type SFS</span></div>
<div class="hd" style="left:44px;top:651px;width:6px"></div>
<div class="ex p" style="left:32px;top:646px"></div>
<svg style="left:50px;top:641px" width="20" height="20" viewBox="0 0 20 20"><path d="M0 1l1-1h8v7l-1 2h-8z" fill="#0a0a9c"/><rect x="1" y="2.5" width="5.500" height="5.500" fill="#28d0f8"/><path d="M2.5 4l2.500 2.500M5 4l-2.500 2.500" stroke="#0a0a9c" stroke-width="0.800"/><path d="M11 12l1-1h8v7l-1 2h-8z" fill="#0a0a9c"/><rect x="12" y="13.5" width="5.500" height="5.500" fill="#28d0f8"/><path d="M13.5 15l2.500 2.500M16 15l-2.500 2.500" stroke="#0a0a9c" stroke-width="0.800"/><path d="M4.500 11l7.500-8q1.800-1.500 3.200 0q1.300 1.500 0 3.200l-7.500 8q-1.800 1.500-3.200 0q-1.300-1.500 0-3.200z" fill="#fafafa" stroke="#202020" stroke-width="1.100"/><path d="M6.500 12l6.500-7" stroke="#202020" stroke-width="0.900"/><path d="M8.500 14.500l7-7.500" stroke="#202020" stroke-width="0.900"/></svg>
<div class="t" id="tr32" style="left:74.5px;top:645px"><span id="trr32" style="letter-spacing:-0.385px">Díl - PK299_E4.5A</span></div>
</div>
<!-- h scrollbar -->
<div class="a" style="left:31px;top:873px;width:190px;height:16px;background:#eceae4;background-image:repeating-conic-gradient(#fff 0 25%,#d4d0c8 0 50%);background-size:2px 2px"></div>
<div class="btn3" style="left:31px;top:873px;width:16px;height:16px"></div>
<div class="btn3" style="left:47px;top:873px;width:22px;height:16px"></div>
<div class="btn3" style="left:205px;top:873px;width:16px;height:16px"></div>
<svg style="left:36px;top:877px" width="6" height="8" viewBox="0 0 6 8"><path d="M5 0v8l-4-4z" fill="#000"/></svg>
<svg style="left:210px;top:877px" width="6" height="8" viewBox="0 0 6 8"><path d="M1 0v8l4-4z" fill="#000"/></svg>
<!-- Návrh tab -->
<div class="a" style="left:30px;top:893px;width:37px;height:18px;background:linear-gradient(#fff,#eef4f8);border:1px solid #b8d0dc;border-top:none;border-radius:0 0 4px 4px"></div>
<div class="t" style="left:33px;top:896px">Návrh</div>
<div class="a" style="left:5px;top:100px;width:15px;height:2px;background:repeating-linear-gradient(90deg,#303030 0,#303030 2px,transparent 2px,transparent 4px)"></div>
<div class="a" style="left:2px;top:109px;width:2px;height:146px;background:repeating-linear-gradient(#606060 0,#606060 2px,transparent 2px,transparent 4px,#606060 4px,#606060 6px,transparent 6px,transparent 8px,#606060 8px,#606060 10px,transparent 10px,transparent 17px)"></div>
<div class="a" style="left:3px;top:110px;width:2px;height:146px;background:repeating-linear-gradient(#fff 0,#fff 2px,transparent 2px,transparent 4px,#fff 4px,#fff 6px,transparent 6px,transparent 8px,#fff 8px,#fff 10px,transparent 10px,transparent 17px)"></div>
<div class="a" style="left:7px;top:107px;width:16px;height:15px;background:#e0e4ec;border:1px solid #eef0f4;border-radius:2px"></div>
<svg style="left:9px;top:108px" width="13" height="13" viewBox="0 0 16 16"><path d="M1 8l4-3h6l-3 3z" fill="#f8e020"/><path d="M1 8h7v3h-7z" fill="#f0c020"/><path d="M5 3l3-2h4l-3 2z" fill="#f0a030"/><path d="M5 3h4v3h-4z" fill="#e07020"/><path d="M9 3l3-2v3l-3 2z" fill="#b05010"/><path d="M1 11h8v4h-8z" fill="#28d0f8"/><path d="M9 11l5-5v4l-5 5z" fill="#1a3ae0"/><path d="M8 8l3-3h3l-5 6h-1z" fill="#2a5ae8"/></svg>
<svg style="left:9px;top:125px" width="13" height="13" viewBox="0 0 16 16"><path d="M5 1q4 1 2 4q-3 3 1 5q3 1 4 4" fill="none" stroke="#000" stroke-width="1.500"/></svg>
<svg style="left:9px;top:142px" width="13" height="13" viewBox="0 0 16 16"><path d="M1 6l5-5l3 3l2-2l4 4l-5 7l-3-3l-2 2z" fill="#1a3ae0"/><path d="M6 1l3 8l-2 3l-2-8z" fill="#5a8cf8"/></svg>
<svg style="left:9px;top:159px" width="13" height="13" viewBox="0 0 16 16"><path d="M4 4l4 2l4-4l3 5l-5 6l-6-3z" fill="#28d0f8" stroke="#1a3ae0"/><path d="M1 1l12 13" stroke="#1a3ae0" stroke-width="1.300"/><path d="M1 1l4 1l-3 2z" fill="#1a3ae0"/></svg>
<svg style="left:9px;top:176px" width="13" height="13" viewBox="0 0 16 16"><path d="M3 11l7-8q1.500-1.500 3 0q1.500 1.500 0 3l-7 8q-2 1.500-3.500 0q-1.500-1.500 0.500-3.500l6-6.500" fill="none" stroke="#404040" stroke-width="1.400"/></svg>
<svg style="left:9px;top:193px" width="13" height="13" viewBox="0 0 16 16"><path d="M8 2l-6 12M8 2l6 12" stroke="#000" stroke-width="1.300"/><circle cx="8" cy="2.500" r="1.500" fill="#000"/><path d="M3 11q5 3 10 0" fill="none" stroke="#000"/></svg>
<svg style="left:9px;top:210px" width="13" height="13" viewBox="0 0 16 16"><path d="M1 2h14l-5 6v3h-4v-3z" fill="#1a6ae8"/><path d="M2 2h12" stroke="#28d0f8" stroke-width="1.500"/><rect x="6.500" y="12.500" width="3" height="3" fill="#fff" stroke="#e02020"/></svg>
<svg style="left:9px;top:227px" width="13" height="13" viewBox="0 0 16 16"><path d="M2.500 1.500h8l3 3v10h-11z" fill="#fff" stroke="#404040"/><path d="M3 4.500h10M3 7.500h10M3 10.500h10M5.500 2v12M8.500 2v12M11.500 5v9" stroke="#404040" stroke-width="0.900"/></svg>
<svg style="left:9px;top:244px" width="13" height="13" viewBox="0 0 16 16"><rect x="2" y="1" width="5" height="5" fill="#fff" stroke="#0a0a9c" stroke-width="1.300"/><path d="M4.500 6v5M1 11.500h13" stroke="#0a0a9c" stroke-width="1.500"/><path d="M9 8l2 3l3-7" fill="none" stroke="#303030" stroke-width="1.200"/><path d="M1 13.500h13" stroke="#28d0f8" stroke-width="2"/></svg>
<div class="a" style="left:6px;top:263px;width:14px;height:1px;background:#f4f4f4;box-shadow:0 -1px 0 #8a8c92"></div>
<svg style="left:3px;top:270px" width="16" height="16" viewBox="0 0 16 16"><path d="M1 4h10l2-2v11l-2 2h-10z" fill="#5a5a5a"/><rect x="1" y="5" width="10" height="10" fill="#707070" stroke="#5a5a5a"/><circle cx="6" cy="10" r="3" fill="#a0a0a0" stroke="#404040"/><path d="M10 3h6M13 0v6" stroke="#5a5a5a" stroke-width="2"/></svg>
<svg style="left:18px;top:282px" width="4" height="4" viewBox="0 0 4 4"><path d="M4 0v4h-4z" fill="#505050"/></svg>
<svg style="left:5px;top:292px" width="16" height="16" viewBox="0 0 16 16"><path d="M1 9l3-2h9v6l-2 2h-10z" fill="#000"/><path d="M1 14l3-5h10l-3 5z" fill="#a0a030"/><path d="M2 8h4l1 1h5" stroke="#f0e890" stroke-width="1.500" fill="none"/><path d="M7 2l2-2h7v6l-2 2h-7z" fill="#1a3ae0"/><rect x="8" y="2" width="5" height="5" fill="#28d0f8"/><circle cx="10.500" cy="4.500" r="1.300" fill="#1a3ae0"/><path d="M2 6q0-4 4-4" fill="none" stroke="#0a0a9c" stroke-width="1.200"/><path d="M4 0l3 2l-3 2z" fill="#0a0a9c"/></svg>
<div class="a" style="left:6px;top:315px;width:14px;height:1px;background:#f4f4f4;box-shadow:0 -1px 0 #8a8c92"></div>
<div class="sel" style="left:3px;top:320px;width:20px;height:20px"></div>
<svg style="left:6px;top:322px" width="16" height="17" viewBox="0 0 16 17"><path d="M1 2.500h13" stroke="#000" stroke-width="1.300"/><path d="M0 2.500l3-2v4zM15 2.500l-3-2v4z" fill="#000"/><g transform="translate(1,4) scale(0.850)"><path d="M1 5l3-3h9l-3 3z" fill="#28d0f8"/><path d="M1 5h9v9h-9z" fill="#5a8cf8"/><path d="M10 5l3-3v9l-3 3z" fill="#1a3ae0"/><path d="M1 5l3-3h9v9l-3 3h-9zM1 5h9v9M10 5l3-3" fill="none" stroke="#0a0a9c" stroke-width="1"/></g></svg>
<svg style="left:3px;top:344px" width="16" height="16" viewBox="0 0 16 16"><g transform="translate(0,3) scale(0.900)"><path d="M1 5l3-3h9l-3 3z" fill="#28d0f8"/><path d="M1 5h9v9h-9z" fill="#5a8cf8"/><path d="M10 5l3-3v9l-3 3z" fill="#1a3ae0"/><path d="M1 5l3-3h9v9l-3 3h-9zM1 5h9v9M10 5l3-3" fill="none" stroke="#0a0a9c" stroke-width="1"/></g><path d="M7 2q5-2 7 4" fill="none" stroke="#000" stroke-width="1.200"/><path d="M6 2l3-2v4zM14 8l-2-3h4z" fill="#000"/></svg>
<svg style="left:18px;top:355px" width="4" height="4" viewBox="0 0 4 4"><path d="M4 0v4h-4z" fill="#505050"/></svg>
<div class="a" style="left:6px;top:366px;width:14px;height:1px;background:#f4f4f4;box-shadow:0 -1px 0 #8a8c92"></div>
<svg style="left:3px;top:373px" width="16" height="16" viewBox="0 0 16 16"><ellipse cx="8" cy="10" rx="8" ry="5.500" fill="#1a3ae0"/><ellipse cx="8" cy="8.500" rx="7.500" ry="4.500" fill="#28d0f8" stroke="#1a3ae0"/><circle cx="4" cy="3.500" r="2.300" fill="#5a8cf8" stroke="#1a3ae0"/><circle cx="11.500" cy="3.500" r="2.300" fill="#5a8cf8" stroke="#1a3ae0"/><circle cx="4.500" cy="8.500" r="1.400" fill="#1a3ae0"/><circle cx="11.500" cy="8.500" r="1.400" fill="#1a3ae0"/><circle cx="8" cy="10.500" r="1.400" fill="#1a3ae0"/></svg>
<svg style="left:18px;top:384px" width="4" height="4" viewBox="0 0 4 4"><path d="M4 0v4h-4z" fill="#505050"/></svg>
<div class="a" style="left:6px;top:396px;width:14px;height:1px;background:#f4f4f4;box-shadow:0 -1px 0 #8a8c92"></div>
<svg style="left:3px;top:404px" width="16" height="16" viewBox="0 0 16 16"><path d="M1 5l3-3h10v9l-3 3h-10z" fill="#5a5a5a"/><path d="M2 6h8v7h-8z" fill="#707070"/><path d="M4 2.500h9l-2 2h-9z" fill="#8a8a8a"/><path d="M1 9h5v-3h3v4h-3v4h-5z" fill="#8a8a8a" stroke="#5a5a5a"/></svg>
<svg style="left:18px;top:416px" width="4" height="4" viewBox="0 0 4 4"><path d="M4 0v4h-4z" fill="#505050"/></svg>
<svg style="left:5px;top:426px" width="16" height="16" viewBox="0 0 16 16"><path d="M2 5l4-4h9v9l-4 5h-9z" fill="#1a3ae0"/><path d="M2 6h9v8h-9z" fill="#5a8cf8"/><path d="M3 5l3-3h8l-3 3z" fill="#28d0f8"/><path d="M5 7h6v4h-3" fill="none" stroke="#1a3ae0" stroke-width="1.500"/><path d="M6 8h5l2-2h-5z" fill="#28d0f8"/></svg>
<svg style="left:3px;top:448px" width="16" height="16" viewBox="0 0 16 16"><path d="M1 5l3-3h10v9l-3 3h-10z" fill="#5a5a5a"/><path d="M2 6h8v7h-8z" fill="#707070"/><path d="M4 2.500h9l-2 2h-9z" fill="#8a8a8a"/><rect x="4" y="7" width="5" height="4" fill="#d0d0d0" stroke="#5a5a5a"/></svg>
<svg style="left:18px;top:460px" width="4" height="4" viewBox="0 0 4 4"><path d="M4 0v4h-4z" fill="#505050"/></svg>
<svg style="left:3px;top:470px" width="16" height="16" viewBox="0 0 16 16"><path d="M1 15v-10q1-4 6-4q6 0 8 7v5l-2 2z" fill="#1a3ae0"/><path d="M1 15v-9q1-3 5-3q5 0 6 6v6z" fill="#5a8cf8"/><path d="M6 1q6 0 8 7l-2 1q-1-6-6-6z" fill="#28d0f8"/></svg>
<svg style="left:18px;top:482px" width="4" height="4" viewBox="0 0 4 4"><path d="M4 0v4h-4z" fill="#505050"/></svg>
<svg style="left:5px;top:492px" width="16" height="16" viewBox="0 0 16 16"><path d="M2 4l2-2h10v10l-2 2h-10z" fill="#5a5a5a"/><path d="M2 6h8v7h-8z" fill="#707070"/><path d="M4 2.500h9l-2 2h-9z" fill="#8a8a8a"/><circle cx="7" cy="9" r="2.500" fill="#c8c8c8" stroke="#5a5a5a"/></svg>
<svg style="left:3px;top:514px" width="16" height="16" viewBox="0 0 16 16"><path d="M5 1h10v8l-4 6h-10v-4h4z" fill="#5a5a5a"/><path d="M6 3h7v6h-7z" fill="#8a8a8a"/><path d="M1 12h9l3-3" stroke="#8a8a8a" fill="none"/><path d="M8 4v5M10 4v5" stroke="#5a5a5a" stroke-width="1.500"/></svg>
<svg style="left:3px;top:536px" width="16" height="16" viewBox="0 0 16 16"><path d="M6 1h5l4 9l-3 5h-11z" fill="#1a3ae0"/><path d="M6 2h4l2 13h-11z" fill="#5a8cf8"/></svg>
<svg style="left:5px;top:558px" width="16" height="16" viewBox="0 0 16 16"><path d="M1 4l3-3h11v10l-3 4h-11z" fill="#1a3ae0"/><path d="M2 5h10v9h-10z" fill="#5a8cf8"/><path d="M3 3l2-2h9l-2 2z" fill="#28d0f8"/><rect x="4" y="7" width="6" height="5" fill="none" stroke="#0a0a9c" stroke-width="1.200"/><path d="M5 9.500h4" stroke="#0a0a9c"/></svg>
<svg style="left:3px;top:580px" width="16" height="16" viewBox="0 0 16 16"><path d="M1 8l6-7l8 8l-4 5h-10z" fill="#1a3ae0"/><path d="M7 2l7 7l-3 3l-7-7z" fill="#28d0f8"/><path d="M2 9h6v5h-6z" fill="#5a8cf8"/><path d="M6 8l3 2l-4 2z" fill="#fff" stroke="#1a3ae0" stroke-width="0.800"/></svg>
<svg style="left:18px;top:592px" width="4" height="4" viewBox="0 0 4 4"><path d="M4 0v4h-4z" fill="#505050"/></svg>
<svg style="left:3px;top:602px" width="16" height="16" viewBox="0 0 16 16"><path d="M2 3h13v9l-2 2h-12z" fill="#5a5a5a"/><path d="M3 5l9 8M3 9l5 4M7 5l6 5M12 5l-9 8M8 5l-5 4M13 9l-5 4" stroke="#909090" stroke-width="1"/><path d="M1 14h12" stroke="#404040" stroke-dasharray="2 1"/></svg>
<svg style="left:18px;top:614px" width="4" height="4" viewBox="0 0 4 4"><path d="M4 0v4h-4z" fill="#505050"/></svg>
<svg style="left:3px;top:624px" width="16" height="16" viewBox="0 0 16 16"><path d="M4 3h5v-2h6v8l-3 3h-4l-4 4v-4h-3v-5z" fill="#5a5a5a"/><path d="M5 5h4v4h-4zM10 3h4v5h-4z" fill="#8a8a8a"/><path d="M13 1l-9 12" stroke="#707070" stroke-width="1.500"/></svg>
<svg style="left:18px;top:636px" width="4" height="4" viewBox="0 0 4 4"><path d="M4 0v4h-4z" fill="#505050"/></svg>
<svg style="left:3px;top:646px" width="16" height="16" viewBox="0 0 16 16"><path d="M1 6l2-2h9v8l-2 3h-9z" fill="#1a3ae0"/><path d="M2 7h8v7h-8z" fill="#5a8cf8"/><ellipse cx="11.500" cy="4.500" rx="4" ry="2.800" transform="rotate(-40 11.500 4.500)" fill="#e8f8f8" stroke="#202020" stroke-width="1.200"/><path d="M9 5l4-3M10.500 7l4-3" stroke="#20a0a0" stroke-width="1.500"/></svg>
<div class="a" style="left:6px;top:669px;width:14px;height:1px;background:#f4f4f4;box-shadow:0 -1px 0 #8a8c92"></div>
<svg style="left:5px;top:676px" width="16" height="16" viewBox="0 0 16 16"><rect x="0.500" y="6.500" width="13" height="8" fill="#fff" stroke="#000" stroke-width="1.300"/><rect x="2.500" y="8.500" width="4" height="2.500" fill="#fff" stroke="#0a0a9c"/><path d="M8 12.500h5" stroke="#000"/><path d="M8 2l2-2h6v5l-2 2h-6z" fill="#1a3ae0"/><rect x="9" y="2.500" width="4" height="4" fill="#28d0f8"/><path d="M3 5q0-3 4-3" fill="none" stroke="#0a0a9c" stroke-width="1.200"/><path d="M2 3l1.500 3l2-2.500z" fill="#0a0a9c"/></svg>
<div class="a" style="left:1px;top:696px;width:25px;height:13px;background:linear-gradient(90deg,#5c5c60,#8a8c92);border-radius:0 0 4px 4px"></div>
<svg style="left:16px;top:698px" width="7" height="8" viewBox="0 0 7 8"><path d="M0.500 0v8" stroke="#fff" stroke-width="1"/><path d="M2.500 0v8l4-4z" fill="#000"/><path d="M6.500 4l-3 4" stroke="#fff"/></svg>
<div class="sel" style="left:29px;top:117px;width:20px;height:20px"></div>
<svg style="left:32px;top:119px" width="16" height="16" viewBox="0 0 16 16"><path d="M3.500 2v11.500h4M3.500 5.500h5M8.500 5.500v4h3" fill="none" stroke="#000" stroke-width="1.200"/><g fill="#fff" stroke="#000"><rect x="2" y="1" width="3" height="3"/><rect x="7" y="4" width="3" height="3"/><rect x="11" y="8" width="3" height="3"/><rect x="7" y="12" width="3" height="3"/></g></svg>
<svg style="left:55px;top:119px" width="16" height="16" viewBox="0 0 16 16"><path d="M1.500 1v13M1 1.500h4M1 7.500h3M1 13.500h4" fill="none" stroke="#000" stroke-width="1.300"/><path d="M6 5l1.500 1.500l2.500-3M6 9.500l1.500 1.500l2.500-3M6 14l1.500 1.500l2.500-3" fill="none" stroke="#303030" stroke-width="0.900"/><path d="M11 5.500h4M11 9.500h4M11 13.500h4" stroke="#0a0a9c" stroke-width="1.800"/><path d="M2 1.500h5" stroke="#0a0a9c" stroke-width="1.500"/></svg>
<svg style="left:77px;top:126px" width="5" height="3" viewBox="0 0 5 3"><path d="M0 0h5l-2.500 3z" fill="#000"/></svg>
<div class="sep" style="left:88px;top:120px;height:14px"></div>
<svg style="left:98px;top:119px" width="11" height="16" viewBox="0 0 11 16"><rect x="1" y="1" width="8" height="13" fill="#fff" stroke="#0a0a9c" stroke-width="1.400"/><path d="M3 3.500h4M5 3.500v3h2.500M5 5h2" stroke="#303030" stroke-width="0.900" fill="none"/><path d="M1 9.500h8" stroke="#0a0a9c"/><path d="M1 14.500h9" stroke="#0a0a9c" stroke-width="1.500"/></svg>
<svg style="left:117px;top:119px" width="16" height="16" viewBox="0 0 16 16"><rect x="1.500" y="2.500" width="7" height="10" fill="#b0b0b0" stroke="#505050"/><rect x="7.500" y="7.500" width="7" height="7" fill="#b0b0b0" stroke="#505050"/><path d="M3 5h4M3 7h3M3 9h3M9 10h4M9 12h4" stroke="#505050"/><path d="M9 1q4 0 5 4" fill="none" stroke="#303030"/><path d="M12.500 4l1.500 3l1.500-3z" fill="#303030"/></svg>
<!-- 3D model -->
<svg style="left:0;top:0" width="1280" height="1024" viewBox="0 0 1280 1024">
<defs>
<linearGradient id="cyl" x1="0" y1="0" x2="1" y2="0"><stop offset="0" stop-color="#6e6e6e"/><stop offset="0.350" stop-color="#9a9a9a"/><stop offset="1" stop-color="#6a6a6a"/></linearGradient>
<linearGradient id="cyl2" x1="0" y1="0" x2="1" y2="0"><stop offset="0" stop-color="#8c8c8c"/><stop offset="0.300" stop-color="#8a8a8a"/><stop offset="1" stop-color="#666"/></linearGradient>
</defs>
<g stroke="#000" stroke-width="1" stroke-linejoin="round">
<!-- studs -->
<path d="M680.500 216v-13q0-2 2-2h5q2 0 2 2v13z" fill="url(#cyl)"/>
<path d="M746.500 222v-19.500h13v19.500z" fill="url(#cyl)"/>
<!-- nut + bearing block -->
<path d="M674.500 216h20v5h-20z" fill="#8e8e8e"/><path d="M674.500 216h3v5h-3z" fill="#1a1a1a" stroke="none"/>
<path d="M664.500 221l40.500 0v5h-40.500z" fill="#727272"/><path d="M664.500 221.500l13 0v4.500h-13z" fill="#a0a0a0"/>
<!-- left plate (behind rails) -->
<path d="M644.500 231.500l19-1v194h-17.500z" fill="#9c9c9c"/>
<!-- top block -->
<path d="M663.500 226.500h17v24h-17z" fill="#9a9a9a"/>
<path d="M680.500 226.500h27v24h-27z" fill="#767676"/>
<path d="M686.500 225.500h6v23h-6z" fill="#1c1c1c" stroke="none"/><path d="M688 227v21M690.500 227v21" stroke="#e8e8e8" stroke-width="1" stroke-dasharray="1 1.500" fill="none"/>
<path d="M707.500 224.500h8.500v26h-8.500z" fill="#9c9c9c"/>
<!-- rails region -->
<path d="M647.500 256.500l68 -6v174h-68z" fill="#8c8c8c"/>
<path d="M648.500 257h7v167h-7z" fill="#9c9c9c" stroke="none"/>
<path d="M655 256h4v168h-4z" fill="#0a0a0a" stroke="none"/>
<path d="M659 256h5v168h-5z" fill="#7c7c7c" stroke="none"/>
<path d="M664 256h2v168h-2z" fill="#0a0a0a" stroke="none"/>
<path d="M666 256h2v168h-2z" fill="#909090" stroke="none"/>
<path d="M668 257h6v167h-6z" fill="#0e0e0e" stroke="none"/>
<path d="M670.500 262v40M671.500 330v50" stroke="#6a6a6a" stroke-width="1" fill="none"/>
<path d="M674 252h2.500v172h-2.500z" fill="#808080" stroke="none"/>
<path d="M676.500 252h1.200v172h-1.200z" fill="#0a0a0a" stroke="none"/>
<path d="M677.700 251h4.300v173h-4.300z" fill="#868686" stroke="none"/>
<path d="M682 250.500h10.500v173.500h-10.500z" fill="url(#cyl2)" stroke="none"/>
<path d="M692.500 250.500h2v173.500h-2z" fill="#0a0a0a" stroke="none"/>
<path d="M694.500 251h7v173h-7z" fill="#9c9c9c" stroke="none"/>
<path d="M701.500 251h3v173h-3z" fill="#0a0a0a" stroke="none"/>
<path d="M704.500 251h5v173h-5z" fill="#7a7a7a" stroke="none"/>
<path d="M709.500 251h2v173h-2z" fill="#0a0a0a" stroke="none"/>
<path d="M711.500 251h2.500v173h-2.500z" fill="#8a8a8a" stroke="none"/>
<path d="M714 251h2v173h-2z" fill="#0a0a0a" stroke="none"/>
<!-- rail holes -->
<g fill="#7a7a7a"><ellipse cx="652" cy="275" rx="2" ry="3.500"/><ellipse cx="652.500" cy="331" rx="2" ry="3.500"/><ellipse cx="653" cy="386" rx="2" ry="3.500"/><ellipse cx="697" cy="269" rx="2" ry="3.500"/><ellipse cx="697.500" cy="324" rx="2" ry="3.500"/><ellipse cx="697.500" cy="380" rx="2" ry="3.500"/></g>
<!-- lower rail ends -->
<path d="M653 630h69v48l-69 9z" fill="#8a8a8a"/>
<path d="M657 638h5v48h-5z" fill="#0a0a0a" stroke="none"/>
<path d="M664 638h4v47h-4z" fill="#0a0a0a" stroke="none"/>
<path d="M670 638h3v46h-3z" fill="#9c9c9c" stroke="none"/>
<path d="M674 638h2v46h-2z" fill="#0a0a0a" stroke="none"/>
<path d="M679 638h7v45h-7z" fill="#6e6e6e" stroke="none"/>
<path d="M686 638h10v44h-10z" fill="#9a9a9a" stroke="none"/>
<path d="M697 638h7v43h-7z" fill="#a0a0a0" stroke="none"/>
<path d="M704 636h4v44h-4z" fill="#0a0a0a" stroke="none"/>
<path d="M708 636h4v44h-4z" fill="#7a7a7a" stroke="none"/>
<path d="M712 636h1.500v43h-1.500z" fill="#0a0a0a" stroke="none"/>
<path d="M716 636h4v42h-4z" fill="#0a0a0a" stroke="none"/>
<ellipse cx="700.500" cy="659" rx="1.800" ry="3.500" fill="#7a7a7a"/>
<ellipse cx="657" cy="663" rx="1.800" ry="3.500" fill="#7a7a7a"/>
<path d="M653 686.500l67-9l40.500-1.500v2l-40.500 3.500l-67 9z" fill="#2a2a2a" stroke="none"/>
<!-- light strip + column -->
<path d="M715.500 222.500l16.500 -1.500l3.500 455.500l-15 1.500z" fill="#9c9c9c"/>
<path d="M732 221l24.500 1.500l4 454h-25z" fill="#717171"/>
<!-- flange + motor -->
<path d="M757 242.500h41.500v85l-6 1.500h-35.500z" fill="#787878"/>
<path d="M790.500 244h8v83.500l-6 1.500h-2z" fill="#6a6a6a" stroke="none"/>
<path d="M757 248.500h34M757 306.500h41.500M790.500 244v85M794 244v84M796.500 244v84" fill="none"/>
<path d="M793.500 244h1.500v84h-1.500z" fill="#0a0a0a" stroke="none"/>
<path d="M756 222.500l73 1.500v18.500l-73 -1z" fill="#757575"/>
<path d="M780 243.500h40l9-1" fill="none" stroke-width="1.500"/>
<!-- carriage -->
<path d="M562 426l34.500 -3l1.500 214l-34 3.500z" fill="#9a9a9a"/>
<path d="M596.500 422.500h5l1 214.500h-4.500z" fill="#8c8c8c"/>
<path d="M601.500 423.500h68l2 212.500h-69z" fill="#737373"/>
<path d="M669.500 423.500l2 0l1.500 212.500h-2z" fill="#8c8c8c"/>
<path d="M671.500 424l26 -1l2 212l-26.500 1z" fill="#9b9b9b"/>
<path d="M697.500 423l17 0l2.500 210l-17.500 2z" fill="#767676"/>
<path d="M714.500 426h6l1.500 206h-5.500z" fill="#7c7c7c"/>
<path d="M715 440h6M715 446h6M715 488h6M716 494h6M716 570h6M716 578h6M716 610h6" fill="none"/>
<!-- carriage holes -->
<g fill="#727272"><ellipse cx="676.500" cy="443.500" rx="2.200" ry="4"/><ellipse cx="688.800" cy="439" rx="2.200" ry="4"/><ellipse cx="677.300" cy="475.500" rx="2.200" ry="4"/><ellipse cx="689.500" cy="476" rx="2.200" ry="4"/><ellipse cx="678.500" cy="586" rx="2.200" ry="4"/><ellipse cx="690" cy="582" rx="2.200" ry="4"/><ellipse cx="679" cy="618.500" rx="2.200" ry="4"/><ellipse cx="690.500" cy="619.500" rx="2.200" ry="4"/></g>
<g fill="#8a8a8a"><circle cx="619.800" cy="533.600" r="1.800"/><circle cx="652.300" cy="534.400" r="1.800"/><circle cx="620.500" cy="617.500" r="1.800"/><circle cx="653.500" cy="618" r="1.800"/></g>
<path d="M633.500 537q0-3 3-3q3 0 3 3v77q0 3-3 3q-3 0-3-3z" fill="#7a7a7a"/>
<!-- knob -->
<path d="M541.500 455q0-7 8-7.500l38-1.500q8 0 8 7v53q0 7-8 7.500l-38 1.500q-8 0-8-7z" fill="#8e8e8e"/>
<path d="M541.500 455q0-7 8-7.500l20-1q-3 3-3 8v52q0 5 4 8l-21 0.500q-8 0-8-7z" fill="#a2a2a2"/>
<path d="M565.500 454q0-7 6.500-7.500q6 0 6 7v53q0 7-6 8q-6.500 0-6.500-8z" fill="url(#cyl)"/>
<path d="M578 454q0-7 6-7.500l3 0q8 0 8 7v53q0 7-8 7.500l-3 0q-6 0-6-7z" fill="#7c7c7c"/>
<path d="M542 456l24-3.500l29 1.500M542 505l24 -3l29 1" fill="none"/>
<!-- spindle -->
<path d="M584.500 637l69 -0.500v52.500h-69z" fill="url(#cyl2)"/>
<path d="M584.500 683q34 -4 69 -1v7h-69z" fill="#7a7a7a" stroke="none"/>
<path d="M584.500 683q34 -4 69 -1" fill="none"/>
<path d="M589.500 689h61v10.500h-61z" fill="url(#cyl2)"/>
<path d="M607.500 700h24v41.500h-24z" fill="url(#cyl2)"/>
</g>
<!-- axes -->
<path d="M275 868v-22l-1 0l3-10l3 10l-1 0v22z" fill="#189ee0" stroke="#1680c8" stroke-width="0.600"/>
<path d="M277 865.500h19v-1l9 3l-9 3v-1h-19z" fill="#c01010" stroke="#a00000" stroke-width="0.600"/>
<path d="M276 865.500h-6v-1l-8 3.500l8 3v-1h6z" fill="#10d010" stroke="#10b010" stroke-width="0.600"/>
<text x="272.500" y="834" font-family="Liberation Sans, sans-serif" font-size="12.500" fill="#2a94e4">Z</text>
<text x="254.500" y="873.500" font-family="Liberation Sans, sans-serif" font-size="11.500" fill="#28c428">Y</text>
<text x="306" y="872" font-family="Liberation Sans, sans-serif" font-size="11.500" fill="#c41818">X</text>
</svg>
<!-- bottom property panel -->
<div class="a" style="left:27px;top:923px;width:3px;height:47px;background:repeating-linear-gradient(#dcdcdc 0,#dcdcdc 1px,#9a9a9a 1px,#9a9a9a 2px,#5a5a5a 2px,#5a5a5a 3px)"></div>
<div class="a" style="left:32px;top:921px;width:47px;height:52px;background:linear-gradient(#c9cbd1 0,#bcbec5 50%,#a4a6ad 100%)"></div>
<div class="a" style="left:80px;top:950px;width:1194px;height:23px;background:linear-gradient(#464646 0,#5e5e5e 3px,#747474 8px,#7b7b7b 13px,#6c6c6c 19px,#5a5a5a 22px,#555 23px)"></div>
<div class="a" style="left:80px;top:922px;width:1194px;height:28px;background:#fff"></div>
<div class="a" style="left:83px;top:925px;width:1188px;height:25px;background:#dad7cf"></div>
<div class="t dis" id="b0" style="letter-spacing:-0.027px;left:98px;top:932px"><u>D</u>etekce kolizi</div>
<div class="t dis" id="b1" style="letter-spacing:-0.107px;left:212px;top:932px">Zvý<u>r</u>aznit čelo při kolizi</div>
<div class="t dis" id="b2" style="letter-spacing:-0.051px;left:369px;top:932px">Zvukové <u>u</u>pozornění při kolizi</div>
<div class="t dis" id="b3" style="letter-spacing:-0.095px;left:556px;top:932px">Zasta<u>v</u>it při kolizi</div>
<div class="t dis" id="b4" style="letter-spacing:-0.180px;left:707px;top:932px">Ko<u>m</u>ponenty</div>
<div class="a" style="left:777px;top:927px;width:127px;height:21px;border:1px solid #8a8a84"></div>
<div class="t dis" id="b5" style="letter-spacing:-0.160px;left:783px;top:932px;text-shadow:1px 1px 0 #fff">Výpi<u>s</u> komponemtů</div>
<div class="t dis" style="left:883px;top:932px;text-shadow:1px 1px 0 #fff">&gt;&gt;</div>
<!-- nav + tab -->
<div class="a" style="left:83px;top:954px;width:13px;height:14px;background:#dcd9d1"></div>
<div class="a" style="left:99px;top:954px;width:13px;height:14px;background:#dcd9d1"></div>
<svg style="left:87px;top:957px" width="5" height="8" viewBox="0 0 5 8"><path d="M5 0v8l-4-4z" fill="#000"/></svg>
<svg style="left:103px;top:957px" width="5" height="8" viewBox="0 0 5 8"><path d="M0 0v8l4-4z" fill="#000"/></svg>
<svg style="left:114px;top:950px" width="96" height="20" viewBox="0 0 96 20"><defs><linearGradient id="tabg" x1="0" y1="0" x2="0" y2="1"><stop offset="0" stop-color="#fff"/><stop offset="0.600" stop-color="#f4f5f7"/><stop offset="1" stop-color="#d6d8de"/></linearGradient></defs><path d="M1 0h93l-16 17.500h-74q-3 0-3-3z" fill="url(#tabg)" stroke="#8a8c92" stroke-width="1"/></svg>
<div class="t" id="mozn" style="letter-spacing:-0.104px;left:133px;top:952px;font-size:13px;font-weight:bold;line-height:15px">Možnosti</div>
<!-- status bar -->
<div class="a" style="left:0;top:973px;width:1280px;height:22px;background:linear-gradient(#54565c 0,#3c3f4b 2px,#3c3f4b 9px,#2f2f2f 10px,#2d2d2d 21px,#fff 21px,#fff 22px)"></div>
<div class="a" style="left:1193px;top:978px;width:1px;height:16px;background:#909090"></div>
<div class="t" id="st" style="letter-spacing:-0.056px;left:5px;top:980px;color:#fff">Stisknete levé tlačidlo myši, podržte ho stisknuté a táhněte komponent</div>
<!-- taskbar -->
<div class="a" style="left:0;top:995px;width:1280px;height:29px;background:#d4d0c8"></div>
<div class="a" style="left:2px;top:998px;width:52px;height:22px;background:#d4d0c8;border:1px solid;border-color:#fff #404040 #404040 #fff;box-shadow:inset -1px -1px 0 #808080"></div>
<svg style="left:6px;top:1001px" width="16" height="16" viewBox="0 0 16 16"><path d="M1 3q3-2 6 0l-1 5q-3-2-6 0z" fill="#e8602c"/><path d="M8 3q3 2 6 0l-1 5q-3 2-6 0z" fill="#6cbc3c"/><path d="M0 9q3-2 6 0l-1 5q-3-2-6 0z" fill="#3c78d8"/><path d="M7 9q3 2 6 0l-1 5q-3 2-6 0z" fill="#f0c020"/></svg>
<div class="t" id="start" style="letter-spacing:0.588px;left:22px;top:1003px;font-weight:bold">Start</div>
<div class="a" style="left:59px;top:998px;width:160px;height:22px;background:#fff;background-image:repeating-conic-gradient(#fff 0 25%,#d4d0c8 0 50%);background-size:2px 2px;border:1px solid;border-color:#404040 #fff #fff #404040;box-shadow:inset 1px 1px 0 #808080"></div>
<svg style="left:64px;top:1001px" width="16" height="16" viewBox="0 0 16 16"><circle cx="8" cy="8" r="8" fill="#2a8ad8"/><circle cx="8" cy="8" r="6" fill="none" stroke="#c8e4f8" stroke-width="1"/><path d="M5 4v8M5 8l5-4M5 8l5 4" stroke="#fff" stroke-width="1.600" fill="none"/></svg>
<div class="t" id="task" style="letter-spacing:0.294px;left:83px;top:1003px;font-weight:bold">KOMPAS-3D V10 - [D:...</div>
<div class="a" style="left:1161px;top:1002px;width:16px;height:16px;background:#0a246a"></div>
<div class="t" style="left:1162px;top:1003px;color:#fff;font-size:11px">CS</div>
<div class="a" style="left:1182px;top:999px;width:2px;height:22px;border-left:1px solid #808080;border-right:1px solid #fff"></div>
<div class="a" style="left:1189px;top:1003px;width:6px;height:14px;border:2px solid #000;border-right:none;border-radius:2px 0 0 2px"></div>
<div class="a" style="left:1198px;top:998px;width:79px;height:23px;border:1px solid;border-color:#808080 #fff #fff #808080"></div>
<svg style="left:1201px;top:1001px" width="16" height="16" viewBox="0 0 16 16"><path d="M3 10l9-3l2 4l-9 4z" fill="#a8b0c0" stroke="#606878"/><path d="M1 2l3-1l3 1l1 4l-3 4l-3-3z" fill="#30b030"/></svg>
<div class="a" style="left:1219px;top:1004px;width:16px;height:12px;background:#e01010"></div>
<div class="t" style="left:1220px;top:1004px;color:#fff;font-size:9px;font-weight:bold;font-style:italic;line-height:12px;letter-spacing:-0.500px">ATI</div>
<div class="t" id="clock" style="letter-spacing:0.294px;left:1241px;top:1003px">22:27</div>
<svg style="left:36px;top:925px" width="16" height="16" viewBox="0 0 16 16"><path d="M1 9l3-2M0 12h3M2 15l2-2M9 1l1 2M13 2l-1 2M15 5l-2 1" stroke="#000" stroke-width="1"/><path d="M4 2h6v7h-6z" fill="#f0c040" stroke="#805000" stroke-width="0.800"/><ellipse cx="7" cy="2.500" rx="3" ry="1.500" fill="#f8e080" stroke="#805000" stroke-width="0.800"/><path d="M7 8l2-2h7v6l-2 3h-7z" fill="#1a3ae0"/><rect x="8" y="8.500" width="5" height="5" fill="#5a8cf8"/><path d="M9 7l1-1h5l-1 1z" fill="#28d0f8"/></svg>
<svg style="left:58px;top:925px" width="15" height="15" viewBox="0 0 15 15"><path d="M2 11l8-8.500q1.500-1.500 3.500 0q1.500 1.500 0 3.500l-8 8.500q-2 1.500-3.500 0q-1.500-1.500 0-3.500z" fill="#d8dcf8" stroke="#2a2ad8" stroke-width="1.500"/><path d="M4.500 11.500l7-7.500" stroke="#2a2ad8" stroke-width="1.300"/></svg>
<svg style="left:36px;top:946px" width="17" height="17" viewBox="0 0 17 17"><path d="M5 0.500h7l4.500 4.500v7l-4.500 4.500h-7l-4.500-4.500v-7z" fill="#e81818" stroke="#c00000" stroke-width="0.600"/><text x="8.500" y="10.500" text-anchor="middle" font-family="Liberation Sans, sans-serif" font-weight="bold" font-size="5.500" fill="#fff">STOP</text></svg>
<svg style="left:59px;top:947px" width="14" height="16" viewBox="0 0 14 16"><path d="M0.500 1.500h12v10h-3l1 4l-4-4h-6z" fill="#e0f0fc" stroke="#000" stroke-width="1.100"/><path d="M4.500 4.500q0-2 2.200-2q2.300 0 2.300 1.800q0 1.200-2 2v1.200" fill="none" stroke="#0a0a9c" stroke-width="1.800"/><rect x="6" y="8.500" width="2" height="1.800" fill="#0a0a9c"/></svg>
<div class="a" style="left:167px;top:927px;width:20px;height:20px;background:#d4d1c9;border:1px solid #8c8c84"></div>
<svg style="left:169px;top:929px" width="16" height="16" viewBox="0 0 16 16"><path d="M1 5l2-2h5v8l-2 3h-5z" fill="#707070" stroke="#303030"/><path d="M7 7l2-2h6v6l-2 3h-6z" fill="#8a8a8a" stroke="#303030"/><ellipse cx="5" cy="3" rx="3" ry="1.500" fill="#b0b0b0" stroke="#303030"/><path d="M2 15h10" stroke="#303030" stroke-dasharray="1 1"/></svg>
<div class="a" style="left:189px;top:927px;width:20px;height:20px;background:#d2d7e8;border:1px solid #1c2a68"></div>
<svg style="left:191px;top:929px" width="16" height="16" viewBox="0 0 16 16"><path d="M1 5l2-2h5v8l-2 3h-5z" fill="#707070" stroke="#303030"/><path d="M7 7l2-2h6v6l-2 3h-6z" fill="#8a8a8a" stroke="#303030"/><ellipse cx="5" cy="3" rx="3" ry="1.500" fill="#b0b0b0" stroke="#303030"/><path d="M2 15h10" stroke="#303030" stroke-dasharray="1 1"/></svg>
<div class="a" style="left:324px;top:927px;width:20px;height:20px;background:#d4d1c9;border:1px solid #8c8c84"></div>
<svg style="left:326px;top:929px" width="16" height="16" viewBox="0 0 16 16"><path d="M1 7l3-3h6v8l-3 3h-6z" fill="#707070" stroke="#303030"/><path d="M8 4l3-3h4v9l-3 3h-4z" fill="#8a8a8a" stroke="#303030"/><path d="M2 8h6" stroke="#b0b0b0"/></svg>
<div class="a" style="left:346px;top:927px;width:20px;height:20px;background:#d2d7e8;border:1px solid #1c2a68"></div>
<svg style="left:348px;top:929px" width="16" height="16" viewBox="0 0 16 16"><path d="M1 7l3-3h6v8l-3 3h-6z" fill="#707070" stroke="#303030"/><path d="M8 4l3-3h4v9l-3 3h-4z" fill="#8a8a8a" stroke="#303030"/><path d="M2 8h6" stroke="#b0b0b0"/></svg>
<div class="a" style="left:511px;top:927px;width:20px;height:20px;background:#d4d1c9;border:1px solid #8c8c84"></div>
<svg style="left:513px;top:929px" width="16" height="16" viewBox="0 0 16 16"><path d="M1 6h3l5-5v14l-5-5h-3z" fill="#707070" stroke="#303030"/><path d="M11 3h3M11 6h4M11 9h4M11 12h3" stroke="#303030" stroke-dasharray="1 1"/></svg>
<div class="a" style="left:533px;top:927px;width:20px;height:20px;background:#d2d7e8;border:1px solid #1c2a68"></div>
<svg style="left:535px;top:929px" width="16" height="16" viewBox="0 0 16 16"><path d="M6 6h3l5-5v14l-5-5h-3z" fill="#707070" stroke="#303030"/><path d="M1 1l8 9M9 1l-8 9" stroke="#303030" stroke-width="1.400"/></svg>
<div class="a" style="left:640px;top:927px;width:20px;height:20px;background:#d4d1c9;border:1px solid #8c8c84"></div>
<svg style="left:642px;top:929px" width="16" height="16" viewBox="0 0 16 16"><path d="M1 5l3-3h10v7l-3 3h-10z" fill="#8a8a8a" stroke="#303030"/><path d="M1 5h10v7M11 5l3-3" fill="none" stroke="#303030"/><path d="M7 8l7 7M14 8l-7 7" stroke="#303030" stroke-width="1.500"/></svg>
<div class="a" style="left:662px;top:927px;width:20px;height:20px;background:#d2d7e8;border:1px solid #1c2a68"></div>
<svg style="left:664px;top:929px" width="16" height="16" viewBox="0 0 16 16"><path d="M1 5l3-3h10v7l-3 3h-10z" fill="#8a8a8a" stroke="#303030"/><path d="M1 5h10v7M11 5l3-3" fill="none" stroke="#303030"/><path d="M15 14h-7" stroke="#303030" stroke-width="1.200"/><path d="M10 11.500l-3 2.500l3 2.500z" fill="#303030"/></svg>
<div class="a" style="left:685px;top:927px;width:20px;height:20px;background:#d4d1c9;border:1px solid #8c8c84"></div>
<svg style="left:687px;top:929px" width="16" height="16" viewBox="0 0 16 16"><path d="M8 1l7 3v8l-7 3l-7-3v-8z" fill="#8a8a8a" stroke="#303030"/><path d="M1 4l7 3l7-3M8 7v8M4 2.500l7 3v8M12 2.500l-7 3v8" fill="none" stroke="#404040" stroke-width="0.800"/></svg>
<!-- tooltip -->
<div class="a" style="left:50px;top:73px;width:161px;height:40px;border-radius:3px;background:linear-gradient(#fff 0,#f6f6f8 40%,#dcdde3 100%);border:1px solid #767676;box-shadow:2px 2px 2px rgba(0,0,0,0.450)"></div>
<svg style="left:55px;top:76px" width="16" height="16" viewBox="0 0 16 16"><path d="M1.500 6.500h4l1 1h5v2" fill="#f0e8a0" stroke="#000"/><path d="M1.500 6.500v8h10l3-5h-10l-3 5" fill="#9a9a30" stroke="#000" stroke-linejoin="round"/><path d="M2.500 13l2.500-3.500h8" stroke="#e8e8b0" fill="none"/><path d="M8 4q3-4 6 0" fill="none" stroke="#1a2ab0" stroke-width="1.200"/><path d="M12 3l3 2l0-3z" fill="#1a2ab0"/></svg>
<div class="t" id="tt1" style="letter-spacing:0.640px;left:77px;top:77px;font-weight:bold;color:#4c4c4c">Otevřít (Ctrl+O)</div>
<div class="t" id="tt2" style="letter-spacing:-0.101px;left:77px;top:96px;color:#4c4c4c">Otevřít existující dokument</div>
</div>
</body>
</html>
